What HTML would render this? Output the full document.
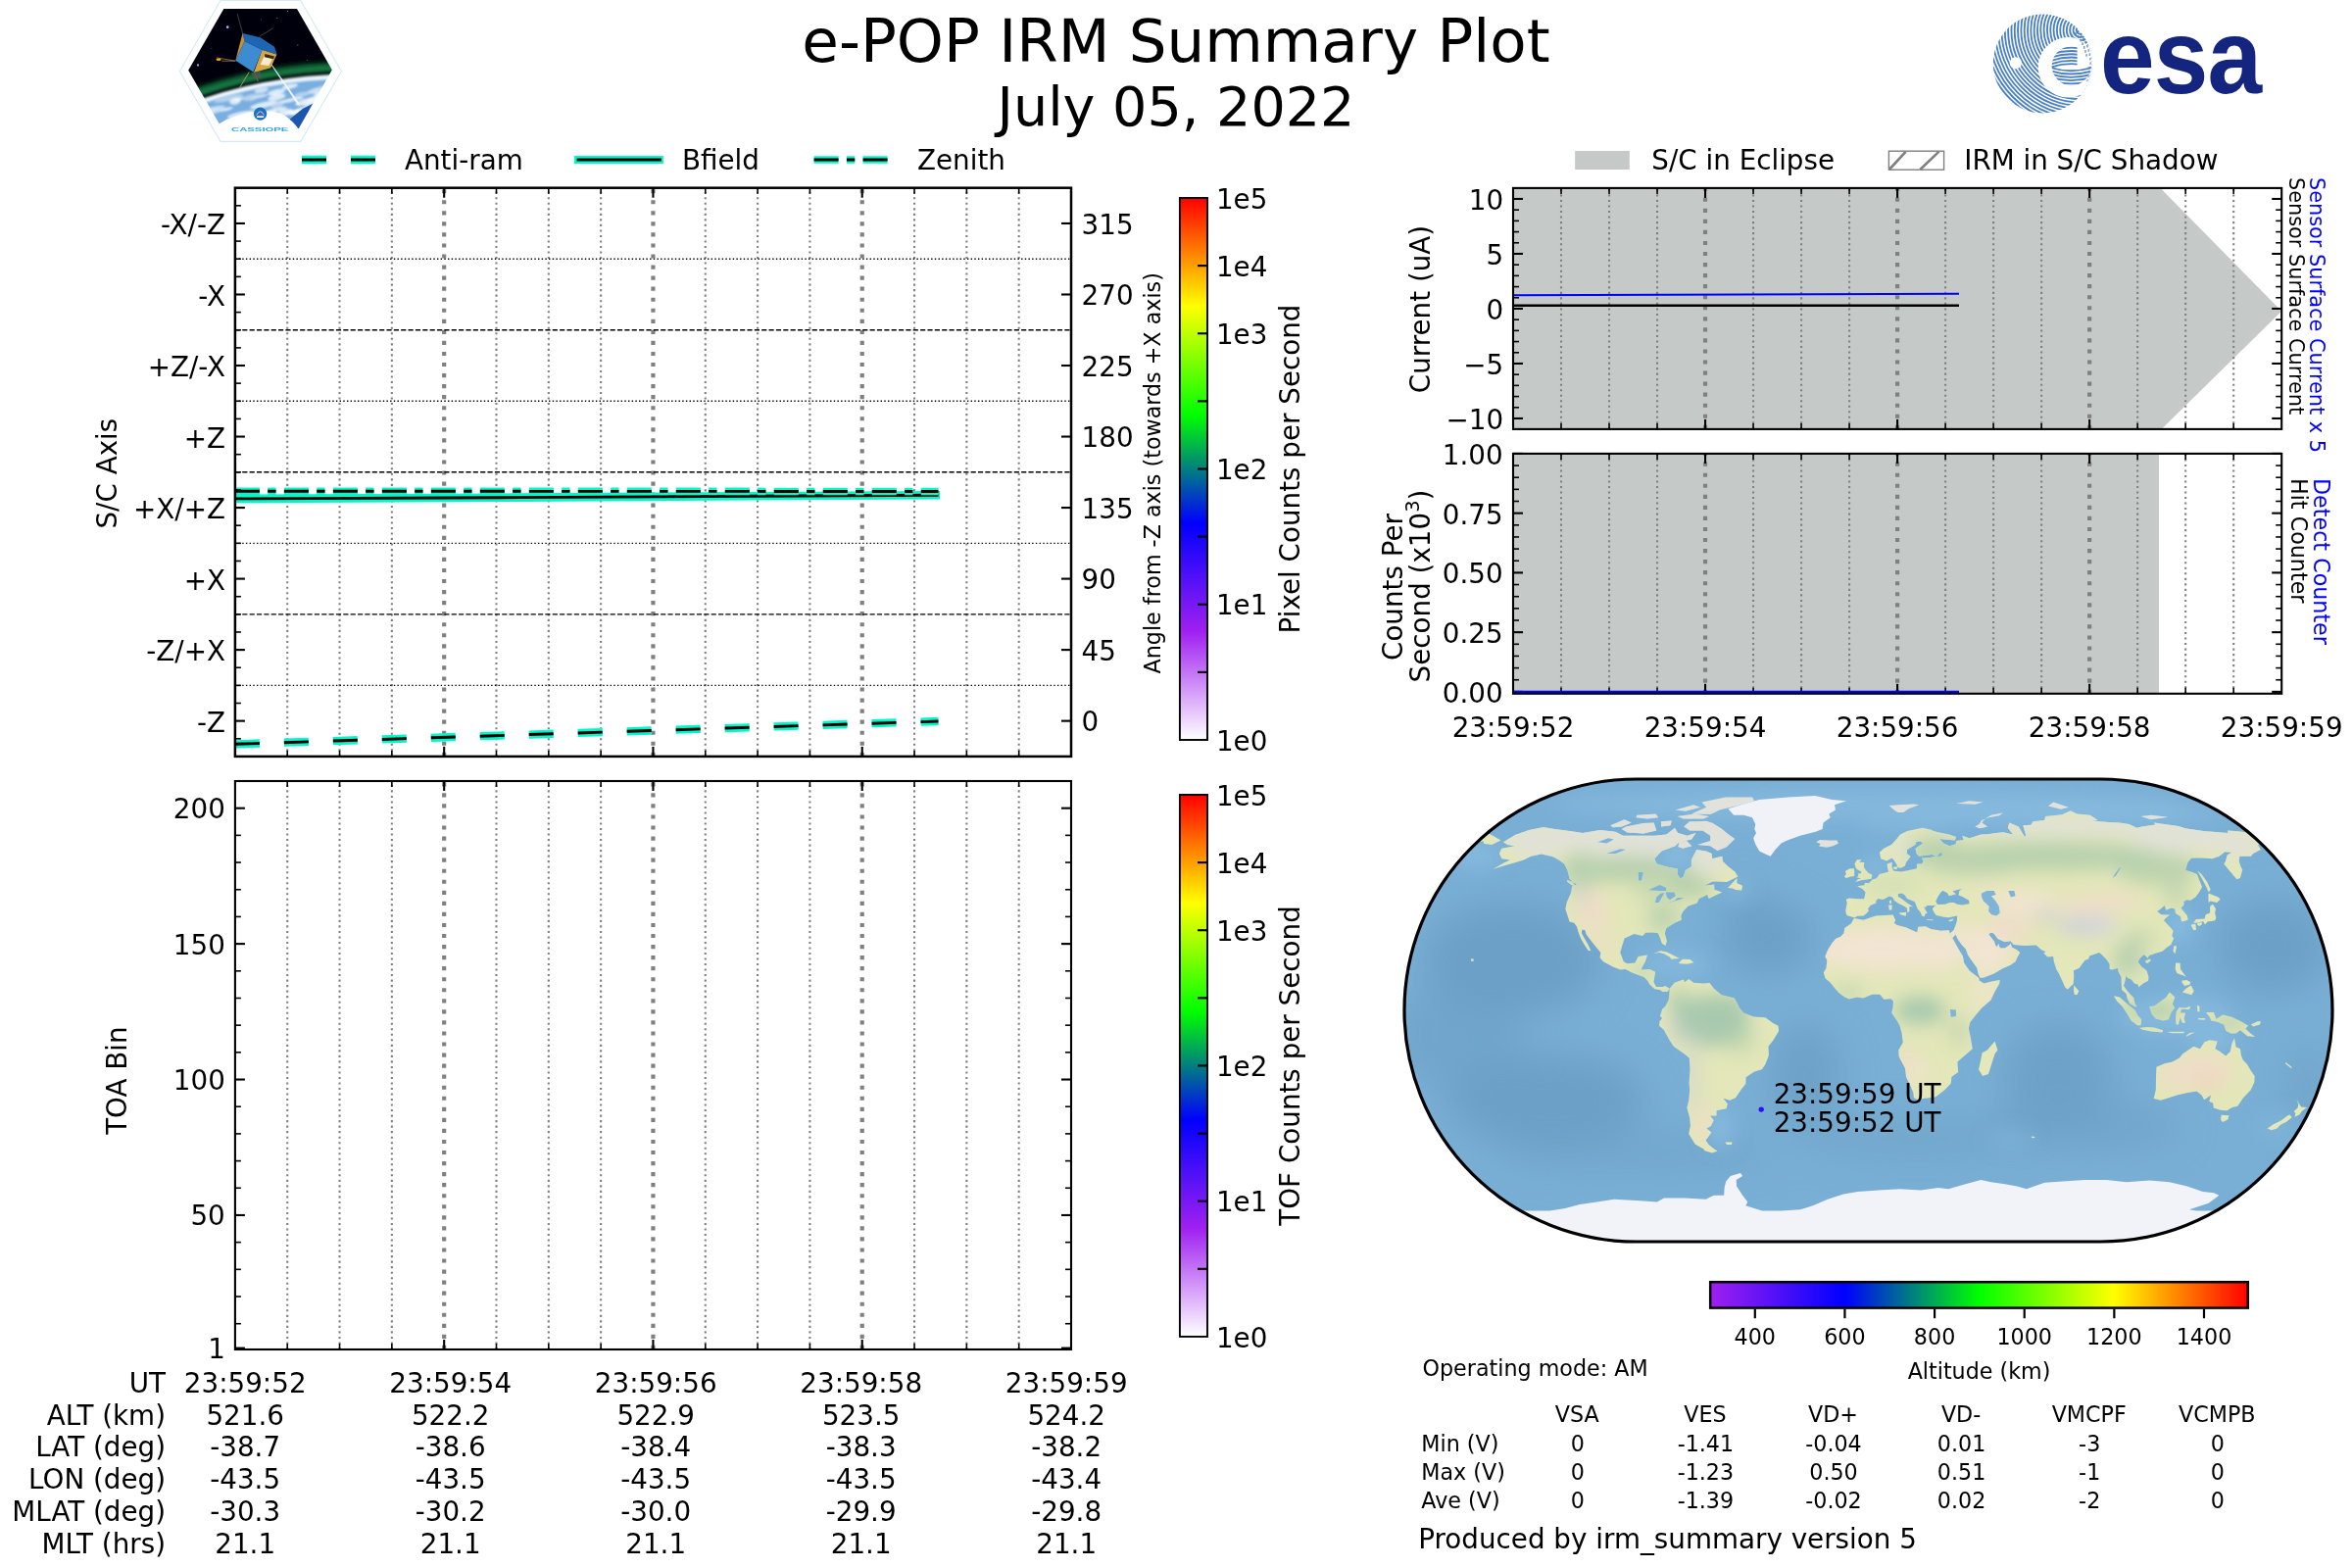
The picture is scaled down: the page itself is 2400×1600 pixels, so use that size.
<!DOCTYPE html><html><head><meta charset="utf-8"><title>e-POP IRM Summary Plot</title>
<style>html,body{margin:0;padding:0;background:#fff;overflow:hidden}svg{display:block;will-change:transform}text{font-family:"DejaVu Sans","Liberation Sans",sans-serif}</style></head><body>
<svg width="2400" height="1600" viewBox="0 0 2400 1600">
<defs>
<linearGradient id="cbv" x1="0" y1="1" x2="0" y2="0"><stop offset="0" stop-color="#ffffff"/><stop offset="0.2" stop-color="#a020f0"/><stop offset="0.4" stop-color="#0000ff"/><stop offset="0.6" stop-color="#00ff00"/><stop offset="0.8" stop-color="#ffff00"/><stop offset="1" stop-color="#ff0000"/></linearGradient>
<linearGradient id="cbh" x1="0" y1="0" x2="1" y2="0"><stop offset="0" stop-color="#a020f0"/><stop offset="0.25" stop-color="#0000ff"/><stop offset="0.5" stop-color="#00ff00"/><stop offset="0.75" stop-color="#ffff00"/><stop offset="1" stop-color="#ff0000"/></linearGradient>
</defs>
<rect x="0.00" y="0.00" width="2400.00" height="1600.00" fill="#fff" stroke="none" stroke-width="0.00"/>
<text x="1200.00" y="63.00" font-size="61.11" text-anchor="middle" fill="#000">e-POP IRM Summary Plot</text>
<text x="1200.00" y="127.50" font-size="55.56" text-anchor="middle" fill="#000">July 05, 2022</text>
<defs>
<clipPath id="hexclip"><polygon points="228.3,9.1 303.0,9.1 338.8,71.3 304.9,131.0 226.4,131.0 192.2,71.7"/></clipPath>
<clipPath id="earthclip"><circle cx="356.3" cy="539.1" r="459"/></clipPath>
<filter id="lb2" x="-30%" y="-30%" width="160%" height="160%"><feGaussianBlur stdDeviation="2.2"/></filter>
<filter id="lb1" x="-30%" y="-30%" width="160%" height="160%"><feGaussianBlur stdDeviation="0.8"/></filter>
<filter id="lb05" x="-10%" y="-10%" width="120%" height="120%"><feGaussianBlur stdDeviation="0.45"/></filter>
<radialGradient id="earthg" cx="0.45" cy="0.0" r="0.5"><stop offset="0" stop-color="#dcecf8"/><stop offset="0.6" stop-color="#8fbfe6"/><stop offset="1" stop-color="#4f8fd0"/></radialGradient>
</defs>
<polygon points="225.0,0.5 306.8,0.5 348.4,72.7 306.8,144.4 225.0,144.4 183.4,72.7" fill="#fff" stroke="#d3ebf1" stroke-width="1.1"/>
<g clip-path="url(#hexclip)" filter="url(#lb05)">
<rect x="185" y="5" width="165" height="135" fill="#02040a"/>
<circle cx="356.3" cy="539.1" r="471.4" fill="none" stroke="#0a6a38" stroke-width="9" filter="url(#lb2)" opacity="0.9"/>
<circle cx="356.3" cy="539.1" r="469.4" fill="none" stroke="#2aa860" stroke-width="2.5" filter="url(#lb2)" opacity="0.8"/>
<circle cx="356.3" cy="539.1" r="460.9" fill="#79aee0"/>
<circle cx="356.3" cy="539.1" r="460.9" fill="none" stroke="#eaf4fc" stroke-width="5" filter="url(#lb1)"/>
<g clip-path="url(#earthclip)"><g filter="url(#lb1)">
<ellipse cx="231.9" cy="92.5" rx="9.4" ry="1.6" fill="#ffffff" opacity="0.75" transform="rotate(-12 231.9 92.5)"/>
<ellipse cx="202.7" cy="112.2" rx="8.2" ry="3.5" fill="#ffffff" opacity="0.75" transform="rotate(-12 202.7 112.2)"/>
<ellipse cx="230.0" cy="111.6" rx="8.0" ry="1.6" fill="#ffffff" opacity="0.75" transform="rotate(-12 230.0 111.6)"/>
<ellipse cx="235.3" cy="129.5" rx="5.3" ry="2.7" fill="#c4dcf2" opacity="0.75" transform="rotate(-12 235.3 129.5)"/>
<ellipse cx="308.1" cy="96.5" rx="8.4" ry="2.6" fill="#c4dcf2" opacity="0.75" transform="rotate(-12 308.1 96.5)"/>
<ellipse cx="211.7" cy="114.7" rx="12.4" ry="2.4" fill="#e4f0fa" opacity="0.75" transform="rotate(-12 211.7 114.7)"/>
<ellipse cx="233.4" cy="100.3" rx="15.4" ry="3.1" fill="#c4dcf2" opacity="0.75" transform="rotate(-12 233.4 100.3)"/>
<ellipse cx="201.0" cy="100.8" rx="12.8" ry="1.9" fill="#e4f0fa" opacity="0.75" transform="rotate(-12 201.0 100.8)"/>
<ellipse cx="255.9" cy="114.4" rx="9.7" ry="1.6" fill="#c4dcf2" opacity="0.75" transform="rotate(-12 255.9 114.4)"/>
<ellipse cx="235.1" cy="123.1" rx="5.9" ry="2.3" fill="#c4dcf2" opacity="0.75" transform="rotate(-12 235.1 123.1)"/>
<ellipse cx="270.0" cy="116.5" rx="12.7" ry="1.5" fill="#e4f0fa" opacity="0.75" transform="rotate(-12 270.0 116.5)"/>
<ellipse cx="209.0" cy="128.2" rx="12.0" ry="2.2" fill="#e4f0fa" opacity="0.75" transform="rotate(-12 209.0 128.2)"/>
<ellipse cx="248.0" cy="120.9" rx="8.5" ry="2.5" fill="#c4dcf2" opacity="0.75" transform="rotate(-12 248.0 120.9)"/>
<ellipse cx="213.6" cy="90.7" rx="7.5" ry="3.0" fill="#e4f0fa" opacity="0.75" transform="rotate(-12 213.6 90.7)"/>
<ellipse cx="216.5" cy="129.1" rx="8.2" ry="1.3" fill="#c4dcf2" opacity="0.75" transform="rotate(-12 216.5 129.1)"/>
<ellipse cx="294.1" cy="127.4" rx="15.5" ry="2.9" fill="#c4dcf2" opacity="0.75" transform="rotate(-12 294.1 127.4)"/>
<ellipse cx="202.5" cy="100.7" rx="15.6" ry="3.0" fill="#ffffff" opacity="0.75" transform="rotate(-12 202.5 100.7)"/>
<ellipse cx="316.3" cy="126.3" rx="12.5" ry="1.4" fill="#e4f0fa" opacity="0.75" transform="rotate(-12 316.3 126.3)"/>
<ellipse cx="320.7" cy="100.8" rx="7.8" ry="2.6" fill="#e4f0fa" opacity="0.75" transform="rotate(-12 320.7 100.8)"/>
<ellipse cx="244.7" cy="88.4" rx="5.5" ry="1.6" fill="#c4dcf2" opacity="0.75" transform="rotate(-12 244.7 88.4)"/>
<ellipse cx="334.6" cy="113.1" rx="9.8" ry="1.7" fill="#e4f0fa" opacity="0.75" transform="rotate(-12 334.6 113.1)"/>
<ellipse cx="215.3" cy="90.7" rx="13.1" ry="2.6" fill="#e4f0fa" opacity="0.75" transform="rotate(-12 215.3 90.7)"/>
<ellipse cx="281.9" cy="112.0" rx="11.4" ry="1.9" fill="#ffffff" opacity="0.75" transform="rotate(-12 281.9 112.0)"/>
<ellipse cx="216.5" cy="111.3" rx="13.5" ry="2.1" fill="#e4f0fa" opacity="0.75" transform="rotate(-12 216.5 111.3)"/>
<ellipse cx="264.5" cy="98.6" rx="9.5" ry="1.3" fill="#ffffff" opacity="0.75" transform="rotate(-12 264.5 98.6)"/>
<ellipse cx="259.9" cy="116.5" rx="9.7" ry="1.7" fill="#e4f0fa" opacity="0.75" transform="rotate(-12 259.9 116.5)"/>
<ellipse cx="204.3" cy="99.2" rx="7.7" ry="1.7" fill="#e4f0fa" opacity="0.75" transform="rotate(-12 204.3 99.2)"/>
<ellipse cx="256.3" cy="99.5" rx="8.6" ry="3.2" fill="#c4dcf2" opacity="0.75" transform="rotate(-12 256.3 99.5)"/>
<ellipse cx="276.3" cy="131.6" rx="9.4" ry="3.3" fill="#ffffff" opacity="0.75" transform="rotate(-12 276.3 131.6)"/>
<ellipse cx="266.7" cy="92.1" rx="7.3" ry="3.2" fill="#e4f0fa" opacity="0.75" transform="rotate(-12 266.7 92.1)"/>
<ellipse cx="245.4" cy="116.9" rx="13.8" ry="2.7" fill="#ffffff" opacity="0.75" transform="rotate(-12 245.4 116.9)"/>
<ellipse cx="271.3" cy="116.8" rx="12.5" ry="1.8" fill="#ffffff" opacity="0.75" transform="rotate(-12 271.3 116.8)"/>
<ellipse cx="329.1" cy="91.3" rx="15.7" ry="3.4" fill="#e4f0fa" opacity="0.75" transform="rotate(-12 329.1 91.3)"/>
<ellipse cx="206.0" cy="127.6" rx="6.4" ry="3.4" fill="#ffffff" opacity="0.75" transform="rotate(-12 206.0 127.6)"/>
<ellipse cx="317.5" cy="118.3" rx="10.1" ry="2.3" fill="#ffffff" opacity="0.75" transform="rotate(-12 317.5 118.3)"/>
<ellipse cx="325.2" cy="97.6" rx="5.0" ry="3.3" fill="#ffffff" opacity="0.75" transform="rotate(-12 325.2 97.6)"/>
<ellipse cx="282.4" cy="99.3" rx="9.4" ry="3.0" fill="#ffffff" opacity="0.75" transform="rotate(-12 282.4 99.3)"/>
<ellipse cx="318.5" cy="112.2" rx="14.7" ry="1.7" fill="#c4dcf2" opacity="0.75" transform="rotate(-12 318.5 112.2)"/>
<ellipse cx="310.5" cy="112.7" rx="13.6" ry="3.3" fill="#ffffff" opacity="0.75" transform="rotate(-12 310.5 112.7)"/>
<ellipse cx="203.6" cy="89.5" rx="11.5" ry="2.3" fill="#c4dcf2" opacity="0.75" transform="rotate(-12 203.6 89.5)"/>
<ellipse cx="282.1" cy="94.1" rx="9.0" ry="3.0" fill="#ffffff" opacity="0.75" transform="rotate(-12 282.1 94.1)"/>
<ellipse cx="240.1" cy="103.3" rx="5.8" ry="3.4" fill="#ffffff" opacity="0.75" transform="rotate(-12 240.1 103.3)"/>
<ellipse cx="251.5" cy="122.6" rx="8.4" ry="1.7" fill="#ffffff" opacity="0.75" transform="rotate(-12 251.5 122.6)"/>
<ellipse cx="315.5" cy="105.6" rx="5.8" ry="3.3" fill="#c4dcf2" opacity="0.75" transform="rotate(-12 315.5 105.6)"/>
<ellipse cx="269.2" cy="107.1" rx="14.4" ry="3.0" fill="#ffffff" opacity="0.75" transform="rotate(-12 269.2 107.1)"/>
<ellipse cx="284.9" cy="129.4" rx="12.0" ry="3.3" fill="#ffffff" opacity="0.75" transform="rotate(-12 284.9 129.4)"/>
<ellipse cx="257.0" cy="123.1" rx="6.8" ry="3.2" fill="#e4f0fa" opacity="0.75" transform="rotate(-12 257.0 123.1)"/>
<ellipse cx="295.4" cy="102.4" rx="14.5" ry="1.8" fill="#ffffff" opacity="0.75" transform="rotate(-12 295.4 102.4)"/>
<ellipse cx="295.9" cy="88.2" rx="8.4" ry="2.5" fill="#ffffff" opacity="0.75" transform="rotate(-12 295.9 88.2)"/>
<ellipse cx="306.1" cy="114.4" rx="10.8" ry="2.4" fill="#ffffff" opacity="0.75" transform="rotate(-12 306.1 114.4)"/>
<ellipse cx="314.4" cy="103.7" rx="13.4" ry="3.5" fill="#ffffff" opacity="0.75" transform="rotate(-12 314.4 103.7)"/>
<ellipse cx="291.4" cy="114.8" rx="8.4" ry="3.3" fill="#ffffff" opacity="0.75" transform="rotate(-12 291.4 114.8)"/>
<ellipse cx="305.6" cy="113.0" rx="15.3" ry="2.4" fill="#ffffff" opacity="0.75" transform="rotate(-12 305.6 113.0)"/>
<ellipse cx="282.8" cy="107.5" rx="6.5" ry="3.0" fill="#c4dcf2" opacity="0.75" transform="rotate(-12 282.8 107.5)"/>
<ellipse cx="333.1" cy="103.0" rx="9.8" ry="2.6" fill="#e4f0fa" opacity="0.75" transform="rotate(-12 333.1 103.0)"/>
<ellipse cx="238.5" cy="129.3" rx="7.2" ry="3.0" fill="#ffffff" opacity="0.75" transform="rotate(-12 238.5 129.3)"/>
<ellipse cx="210.4" cy="116.4" rx="14.9" ry="2.0" fill="#c4dcf2" opacity="0.75" transform="rotate(-12 210.4 116.4)"/>
<ellipse cx="244.1" cy="101.2" rx="5.3" ry="1.2" fill="#ffffff" opacity="0.75" transform="rotate(-12 244.1 101.2)"/>
<ellipse cx="308.1" cy="123.5" rx="15.5" ry="1.6" fill="#ffffff" opacity="0.75" transform="rotate(-12 308.1 123.5)"/>
<ellipse cx="289.2" cy="131.7" rx="5.8" ry="3.3" fill="#ffffff" opacity="0.75" transform="rotate(-12 289.2 131.7)"/>
</g></g>
<polygon points="293.4,123.4 308.7,111.0 320.2,105.2 313.5,119.6 304.9,132.0" fill="#1f57ad"/>
<polygon points="276.0,65.2 276.7,64.8 306.3,106.4 303.9,107.3" fill="#f4f9ff" opacity="0.9"/>
<path d="M221.6 127.2 Q242.7 114.8 265.6 113.3 Q280.0 112.9 289.6 117.2 Q298.2 122.4 305.8 133.0 L305.8 140 L221.6 140Z" fill="#fff"/>
<circle cx="232.2" cy="27.7" r="1.34" fill="#b9a6ff"/>
<circle cx="202.0" cy="66.5" r="1.15" fill="#a99cf0"/>
<circle cx="282.9" cy="18.2" r="0.48" fill="#fff"/>
<circle cx="293.4" cy="11.5" r="0.48" fill="#fff"/>
<circle cx="303.9" cy="45.9" r="0.48" fill="#ddd"/>
<circle cx="266.6" cy="20.1" r="0.38" fill="#ccc"/>
<circle cx="313.5" cy="61.2" r="0.38" fill="#bbb"/>
<circle cx="215.9" cy="49.7" r="0.38" fill="#aaa"/>
<line x1="248.0" y1="35.4" x2="242.2" y2="14.3" stroke="#777" stroke-width="0.5"/>
<line x1="264.7" y1="37.3" x2="278.6" y2="28.7" stroke="#777" stroke-width="0.5"/>
<line x1="240.3" y1="62.2" x2="220.7" y2="58.8" stroke="#b98a3a" stroke-width="0.7"/>
<line x1="240.3" y1="62.2" x2="226.4" y2="62.2" stroke="#caa" stroke-width="0.6"/>
<line x1="254.2" y1="73.6" x2="244.6" y2="89.4" stroke="#c89a50" stroke-width="0.9"/>
<line x1="259.9" y1="73.6" x2="263.3" y2="83.2" stroke="#a67c3c" stroke-width="0.7"/>
<ellipse cx="223.1" cy="60.7" rx="2.6" ry="1.2" fill="#f5a623"/>
<polygon points="267.6,50.7 282.4,55.5 276.2,69.3 259.0,74.1" fill="#d8a63f"/>
<polygon points="269.5,57.4 278.1,59.8 274.3,67.0 265.6,66.0" fill="#f4ecd2"/>
<polygon points="270.4,55.0 280.0,57.4 279.0,60.3 270.0,58.3" fill="#3a2a10"/>
<polygon points="247.5,34.0 265.6,38.3 280.0,47.8 282.7,55.7 267.6,50.9 249.6,42.1" fill="#1f66b3"/>
<polygon points="240.3,61.7 249.6,42.1 267.6,50.9 258.5,73.6" fill="#3c8bd0"/>
<polygon points="240.3,61.7 247.5,34.0 249.6,42.1" fill="#c98f35"/>
<polygon points="256.1,74.6 265.6,72.7 266.6,79.4 259.9,81.3" fill="#555" opacity="0.8"/>
<circle cx="265.6" cy="116.2" r="6.6" fill="#1e6fc2"/>
<path d="M261.8 117.4 Q265.6 110.2 269.4 117.4" fill="none" stroke="#fff" stroke-width="0.7"/>
<rect x="262.0" y="118.4" width="7.2" height="1.6" fill="#fff"/>
<circle cx="266.1" cy="116.4" r="0.8" fill="#e33"/>
</g>
<text x="236.0" y="133.5" font-size="6.1" font-weight="bold" fill="#33a4e8" textLength="58.4" lengthAdjust="spacingAndGlyphs" style="font-family:'Liberation Sans',sans-serif">CASSIOPE</text>
<defs>
<clipPath id="esadisk"><circle cx="2084.3" cy="64.9" r="50.5"/></clipPath>
<clipPath id="esain"><path d="M2090 40H2119.6V68H2140V95H2090Z"/></clipPath>
</defs>
<g clip-path="url(#esadisk)">
<g fill="none" stroke="#4b80c4" stroke-width="1.85">
<circle cx="2122.8" cy="30.7" r="4.00"/>
<circle cx="2122.8" cy="30.7" r="7.32"/>
<circle cx="2122.8" cy="30.7" r="10.64"/>
<circle cx="2122.8" cy="30.7" r="13.96"/>
<circle cx="2122.8" cy="30.7" r="17.28"/>
<circle cx="2122.8" cy="30.7" r="20.60"/>
<circle cx="2122.8" cy="30.7" r="23.92"/>
<circle cx="2122.8" cy="30.7" r="27.24"/>
<circle cx="2122.8" cy="30.7" r="30.56"/>
<circle cx="2122.8" cy="30.7" r="33.88"/>
<circle cx="2122.8" cy="30.7" r="37.20"/>
<circle cx="2122.8" cy="30.7" r="40.52"/>
<circle cx="2122.8" cy="30.7" r="43.84"/>
<circle cx="2122.8" cy="30.7" r="47.16"/>
<circle cx="2122.8" cy="30.7" r="50.48"/>
<circle cx="2122.8" cy="30.7" r="53.80"/>
<circle cx="2122.8" cy="30.7" r="57.12"/>
<circle cx="2122.8" cy="30.7" r="60.44"/>
<circle cx="2122.8" cy="30.7" r="63.76"/>
<circle cx="2122.8" cy="30.7" r="67.08"/>
<circle cx="2122.8" cy="30.7" r="70.40"/>
<circle cx="2122.8" cy="30.7" r="73.72"/>
<circle cx="2122.8" cy="30.7" r="77.04"/>
<circle cx="2122.8" cy="30.7" r="80.36"/>
<circle cx="2122.8" cy="30.7" r="83.68"/>
<circle cx="2122.8" cy="30.7" r="87.00"/>
<circle cx="2122.8" cy="30.7" r="90.32"/>
<circle cx="2122.8" cy="30.7" r="93.64"/>
<circle cx="2122.8" cy="30.7" r="96.96"/>
<circle cx="2122.8" cy="30.7" r="100.28"/>
<circle cx="2122.8" cy="30.7" r="103.60"/>
<circle cx="2122.8" cy="30.7" r="106.92"/>
<circle cx="2122.8" cy="30.7" r="110.24"/>
<circle cx="2122.8" cy="30.7" r="113.56"/>
<circle cx="2122.8" cy="30.7" r="116.88"/>
<circle cx="2122.8" cy="30.7" r="120.20"/>
<circle cx="2122.8" cy="30.7" r="123.52"/>
</g>
<circle cx="2110.4" cy="68.8" r="30.7" fill="#fff"/>
<circle cx="2084.3" cy="64.9" r="49.3" fill="none" stroke="#4b80c4" stroke-width="2.4" stroke-dasharray="1.7 1.7" pathLength="0" opacity="0.0"/>
<g clip-path="url(#esain)"><g fill="none" stroke="#4b80c4" stroke-width="1.85">
<clipPath id="esain2"><circle cx="2113.7" cy="67.2" r="20.0"/></clipPath>
<g clip-path="url(#esain2)">
<path d="M2091.7 52.4 Q2113.7 44.9 2135.7 52.4"/>
<path d="M2091.7 55.7 Q2113.7 48.2 2135.7 55.7"/>
<path d="M2091.7 59.0 Q2113.7 51.5 2135.7 59.0"/>
<path d="M2091.7 62.3 Q2113.7 54.8 2135.7 62.3"/>
<path d="M2091.7 65.6 Q2113.7 58.1 2135.7 65.6"/>
<path d="M2091.7 68.9 Q2113.7 61.4 2135.7 68.9"/>
<path d="M2091.7 68.7 Q2113.7 76.2 2139.7 67.7"/>
<path d="M2091.7 72.0 Q2113.7 79.5 2139.7 71.0"/>
<path d="M2091.7 75.3 Q2113.7 82.8 2139.7 74.3"/>
<path d="M2091.7 78.6 Q2113.7 86.1 2139.7 77.6"/>
<path d="M2091.7 81.9 Q2113.7 89.4 2139.7 80.9"/>
<path d="M2091.7 85.2 Q2113.7 92.7 2139.7 84.2"/>
</g></g></g>
<g fill="#4b80c4">
<rect x="2119.3" y="31.4" width="2.6" height="1.6" opacity="0.90" transform="rotate(-112 2120.6 32.2)"/>
<rect x="2116.8" y="33.7" width="2.6" height="1.6" opacity="0.90" transform="rotate(-112 2118.1 34.5)"/>
<rect x="2122.2" y="34.8" width="2.6" height="1.6" opacity="0.87" transform="rotate(-107 2123.5 35.6)"/>
<rect x="2119.4" y="36.8" width="2.6" height="1.6" opacity="0.87" transform="rotate(-107 2120.7 37.6)"/>
<rect x="2124.6" y="38.5" width="2.6" height="1.6" opacity="0.84" transform="rotate(-102 2125.9 39.3)"/>
<rect x="2121.8" y="40.3" width="2.6" height="1.6" opacity="0.84" transform="rotate(-102 2123.1 41.1)"/>
<rect x="2126.8" y="42.4" width="2.6" height="1.6" opacity="0.81" transform="rotate(-96 2128.1 43.2)"/>
<rect x="2123.8" y="43.9" width="2.6" height="1.6" opacity="0.81" transform="rotate(-96 2125.1 44.7)"/>
<rect x="2128.6" y="46.4" width="2.6" height="1.6" opacity="0.78" transform="rotate(-91 2129.9 47.2)"/>
<rect x="2125.4" y="47.6" width="2.6" height="1.6" opacity="0.78" transform="rotate(-91 2126.7 48.4)"/>
<rect x="2130.0" y="50.6" width="2.6" height="1.6" opacity="0.75" transform="rotate(-86 2131.3 51.4)"/>
<rect x="2126.7" y="51.6" width="2.6" height="1.6" opacity="0.75" transform="rotate(-86 2128.0 52.4)"/>
<rect x="2131.0" y="54.9" width="2.6" height="1.6" opacity="0.72" transform="rotate(-81 2132.3 55.7)"/>
<rect x="2127.7" y="55.6" width="2.6" height="1.6" opacity="0.72" transform="rotate(-81 2129.0 56.4)"/>
<rect x="2131.7" y="59.3" width="2.6" height="1.6" opacity="0.69" transform="rotate(-76 2133.0 60.1)"/>
<rect x="2131.9" y="63.8" width="2.6" height="1.6" opacity="0.66" transform="rotate(-70 2133.2 64.6)"/>
<rect x="2131.7" y="68.2" width="2.6" height="1.6" opacity="0.63" transform="rotate(-65 2133.0 69.0)"/>
<rect x="2131.2" y="72.6" width="2.6" height="1.6" opacity="0.60" transform="rotate(-60 2132.5 73.4)"/>
<rect x="2130.2" y="76.9" width="2.6" height="1.6" opacity="0.57" transform="rotate(-55 2131.5 77.7)"/>
<rect x="2128.8" y="81.1" width="2.6" height="1.6" opacity="0.54" transform="rotate(-50 2130.1 81.9)"/>
</g>
<circle cx="2056.9" cy="64.3" r="6.1" fill="#fff"/>
</g>
<text transform="translate(2143.0 94.9) scale(0.926 1)" x="0" y="0" font-size="108" font-weight="bold" fill="#14257f" style="font-family:'Liberation Sans',sans-serif" letter-spacing="-1">esa</text>
<line x1="293.22" y1="771.90" x2="293.22" y2="191.70" stroke="#808080" stroke-width="2.08" stroke-dasharray="2.08 3.44"/>
<line x1="346.54" y1="771.90" x2="346.54" y2="191.70" stroke="#808080" stroke-width="2.08" stroke-dasharray="2.08 3.44"/>
<line x1="399.86" y1="771.90" x2="399.86" y2="191.70" stroke="#808080" stroke-width="2.08" stroke-dasharray="2.08 3.44"/>
<line x1="453.18" y1="771.90" x2="453.18" y2="191.70" stroke="#808080" stroke-width="4.17" stroke-dasharray="4.17 6.88"/>
<line x1="506.49" y1="771.90" x2="506.49" y2="191.70" stroke="#808080" stroke-width="2.08" stroke-dasharray="2.08 3.44"/>
<line x1="559.81" y1="771.90" x2="559.81" y2="191.70" stroke="#808080" stroke-width="2.08" stroke-dasharray="2.08 3.44"/>
<line x1="613.13" y1="771.90" x2="613.13" y2="191.70" stroke="#808080" stroke-width="2.08" stroke-dasharray="2.08 3.44"/>
<line x1="666.45" y1="771.90" x2="666.45" y2="191.70" stroke="#808080" stroke-width="4.17" stroke-dasharray="4.17 6.88"/>
<line x1="719.77" y1="771.90" x2="719.77" y2="191.70" stroke="#808080" stroke-width="2.08" stroke-dasharray="2.08 3.44"/>
<line x1="773.09" y1="771.90" x2="773.09" y2="191.70" stroke="#808080" stroke-width="2.08" stroke-dasharray="2.08 3.44"/>
<line x1="826.41" y1="771.90" x2="826.41" y2="191.70" stroke="#808080" stroke-width="2.08" stroke-dasharray="2.08 3.44"/>
<line x1="879.73" y1="771.90" x2="879.73" y2="191.70" stroke="#808080" stroke-width="4.17" stroke-dasharray="4.17 6.88"/>
<line x1="933.04" y1="771.90" x2="933.04" y2="191.70" stroke="#808080" stroke-width="2.08" stroke-dasharray="2.08 3.44"/>
<line x1="986.36" y1="771.90" x2="986.36" y2="191.70" stroke="#808080" stroke-width="2.08" stroke-dasharray="2.08 3.44"/>
<line x1="1039.68" y1="771.90" x2="1039.68" y2="191.70" stroke="#808080" stroke-width="2.08" stroke-dasharray="2.08 3.44"/>
<line x1="239.90" y1="699.38" x2="1093.00" y2="699.38" stroke="#000" stroke-width="1.39" stroke-dasharray="1.39 2.29"/>
<line x1="239.90" y1="626.85" x2="1093.00" y2="626.85" stroke="#000" stroke-width="1.39" stroke-dasharray="5.14 2.22"/>
<line x1="239.90" y1="554.33" x2="1093.00" y2="554.33" stroke="#000" stroke-width="1.39" stroke-dasharray="1.39 2.29"/>
<line x1="239.90" y1="481.80" x2="1093.00" y2="481.80" stroke="#000" stroke-width="1.39" stroke-dasharray="5.14 2.22"/>
<line x1="239.90" y1="409.27" x2="1093.00" y2="409.27" stroke="#000" stroke-width="1.39" stroke-dasharray="1.39 2.29"/>
<line x1="239.90" y1="336.75" x2="1093.00" y2="336.75" stroke="#000" stroke-width="1.39" stroke-dasharray="5.14 2.22"/>
<line x1="239.90" y1="264.22" x2="1093.00" y2="264.22" stroke="#000" stroke-width="1.39" stroke-dasharray="1.39 2.29"/>
<path d="M239.9 508.9 L530 507.6 L959.0 505.2" fill="none" stroke="#00f8c8" stroke-width="8.6"/>
<path d="M239.9 508.9 L530 507.6 L957.5 505.2" fill="none" stroke="#000" stroke-width="2.9"/>
<line x1="239.90" y1="501.20" x2="957.50" y2="501.50" stroke="#00f8c8" stroke-width="7.60" stroke-dasharray="25 8.33 8.33 8.33"/>
<line x1="239.90" y1="501.20" x2="957.50" y2="501.50" stroke="#000" stroke-width="2.90" stroke-dasharray="25 8.33 8.33 8.33"/>
<line x1="239.90" y1="759.30" x2="957.50" y2="736.00" stroke="#00f8c8" stroke-width="8.30" stroke-dasharray="25 25"/>
<line x1="239.90" y1="759.30" x2="957.50" y2="736.00" stroke="#000" stroke-width="2.90" stroke-dasharray="25 25"/>
<line x1="293.22" y1="771.90" x2="293.22" y2="765.90" stroke="#000" stroke-width="1.60"/>
<line x1="293.22" y1="191.70" x2="293.22" y2="197.70" stroke="#000" stroke-width="1.60"/>
<line x1="346.54" y1="771.90" x2="346.54" y2="765.90" stroke="#000" stroke-width="1.60"/>
<line x1="346.54" y1="191.70" x2="346.54" y2="197.70" stroke="#000" stroke-width="1.60"/>
<line x1="399.86" y1="771.90" x2="399.86" y2="765.90" stroke="#000" stroke-width="1.60"/>
<line x1="399.86" y1="191.70" x2="399.86" y2="197.70" stroke="#000" stroke-width="1.60"/>
<line x1="453.18" y1="771.90" x2="453.18" y2="761.90" stroke="#000" stroke-width="2.10"/>
<line x1="453.18" y1="191.70" x2="453.18" y2="201.70" stroke="#000" stroke-width="2.10"/>
<line x1="506.49" y1="771.90" x2="506.49" y2="765.90" stroke="#000" stroke-width="1.60"/>
<line x1="506.49" y1="191.70" x2="506.49" y2="197.70" stroke="#000" stroke-width="1.60"/>
<line x1="559.81" y1="771.90" x2="559.81" y2="765.90" stroke="#000" stroke-width="1.60"/>
<line x1="559.81" y1="191.70" x2="559.81" y2="197.70" stroke="#000" stroke-width="1.60"/>
<line x1="613.13" y1="771.90" x2="613.13" y2="765.90" stroke="#000" stroke-width="1.60"/>
<line x1="613.13" y1="191.70" x2="613.13" y2="197.70" stroke="#000" stroke-width="1.60"/>
<line x1="666.45" y1="771.90" x2="666.45" y2="761.90" stroke="#000" stroke-width="2.10"/>
<line x1="666.45" y1="191.70" x2="666.45" y2="201.70" stroke="#000" stroke-width="2.10"/>
<line x1="719.77" y1="771.90" x2="719.77" y2="765.90" stroke="#000" stroke-width="1.60"/>
<line x1="719.77" y1="191.70" x2="719.77" y2="197.70" stroke="#000" stroke-width="1.60"/>
<line x1="773.09" y1="771.90" x2="773.09" y2="765.90" stroke="#000" stroke-width="1.60"/>
<line x1="773.09" y1="191.70" x2="773.09" y2="197.70" stroke="#000" stroke-width="1.60"/>
<line x1="826.41" y1="771.90" x2="826.41" y2="765.90" stroke="#000" stroke-width="1.60"/>
<line x1="826.41" y1="191.70" x2="826.41" y2="197.70" stroke="#000" stroke-width="1.60"/>
<line x1="879.73" y1="771.90" x2="879.73" y2="761.90" stroke="#000" stroke-width="2.10"/>
<line x1="879.73" y1="191.70" x2="879.73" y2="201.70" stroke="#000" stroke-width="2.10"/>
<line x1="933.04" y1="771.90" x2="933.04" y2="765.90" stroke="#000" stroke-width="1.60"/>
<line x1="933.04" y1="191.70" x2="933.04" y2="197.70" stroke="#000" stroke-width="1.60"/>
<line x1="986.36" y1="771.90" x2="986.36" y2="765.90" stroke="#000" stroke-width="1.60"/>
<line x1="986.36" y1="191.70" x2="986.36" y2="197.70" stroke="#000" stroke-width="1.60"/>
<line x1="1039.68" y1="771.90" x2="1039.68" y2="765.90" stroke="#000" stroke-width="1.60"/>
<line x1="1039.68" y1="191.70" x2="1039.68" y2="197.70" stroke="#000" stroke-width="1.60"/>
<line x1="239.90" y1="753.77" x2="245.90" y2="753.77" stroke="#000" stroke-width="1.60"/>
<line x1="239.90" y1="735.64" x2="249.90" y2="735.64" stroke="#000" stroke-width="2.10"/>
<line x1="1093.00" y1="735.64" x2="1083.00" y2="735.64" stroke="#000" stroke-width="2.10"/>
<line x1="239.90" y1="717.51" x2="245.90" y2="717.51" stroke="#000" stroke-width="1.60"/>
<line x1="239.90" y1="699.38" x2="245.90" y2="699.38" stroke="#000" stroke-width="1.60"/>
<line x1="239.90" y1="681.24" x2="245.90" y2="681.24" stroke="#000" stroke-width="1.60"/>
<line x1="239.90" y1="663.11" x2="249.90" y2="663.11" stroke="#000" stroke-width="2.10"/>
<line x1="1093.00" y1="663.11" x2="1083.00" y2="663.11" stroke="#000" stroke-width="2.10"/>
<line x1="239.90" y1="644.98" x2="245.90" y2="644.98" stroke="#000" stroke-width="1.60"/>
<line x1="239.90" y1="626.85" x2="245.90" y2="626.85" stroke="#000" stroke-width="1.60"/>
<line x1="239.90" y1="608.72" x2="245.90" y2="608.72" stroke="#000" stroke-width="1.60"/>
<line x1="239.90" y1="590.59" x2="249.90" y2="590.59" stroke="#000" stroke-width="2.10"/>
<line x1="1093.00" y1="590.59" x2="1083.00" y2="590.59" stroke="#000" stroke-width="2.10"/>
<line x1="239.90" y1="572.46" x2="245.90" y2="572.46" stroke="#000" stroke-width="1.60"/>
<line x1="239.90" y1="554.33" x2="245.90" y2="554.33" stroke="#000" stroke-width="1.60"/>
<line x1="239.90" y1="536.19" x2="245.90" y2="536.19" stroke="#000" stroke-width="1.60"/>
<line x1="239.90" y1="518.06" x2="249.90" y2="518.06" stroke="#000" stroke-width="2.10"/>
<line x1="1093.00" y1="518.06" x2="1083.00" y2="518.06" stroke="#000" stroke-width="2.10"/>
<line x1="239.90" y1="499.93" x2="245.90" y2="499.93" stroke="#000" stroke-width="1.60"/>
<line x1="239.90" y1="481.80" x2="245.90" y2="481.80" stroke="#000" stroke-width="1.60"/>
<line x1="239.90" y1="463.67" x2="245.90" y2="463.67" stroke="#000" stroke-width="1.60"/>
<line x1="239.90" y1="445.54" x2="249.90" y2="445.54" stroke="#000" stroke-width="2.10"/>
<line x1="1093.00" y1="445.54" x2="1083.00" y2="445.54" stroke="#000" stroke-width="2.10"/>
<line x1="239.90" y1="427.41" x2="245.90" y2="427.41" stroke="#000" stroke-width="1.60"/>
<line x1="239.90" y1="409.27" x2="245.90" y2="409.27" stroke="#000" stroke-width="1.60"/>
<line x1="239.90" y1="391.14" x2="245.90" y2="391.14" stroke="#000" stroke-width="1.60"/>
<line x1="239.90" y1="373.01" x2="249.90" y2="373.01" stroke="#000" stroke-width="2.10"/>
<line x1="1093.00" y1="373.01" x2="1083.00" y2="373.01" stroke="#000" stroke-width="2.10"/>
<line x1="239.90" y1="354.88" x2="245.90" y2="354.88" stroke="#000" stroke-width="1.60"/>
<line x1="239.90" y1="336.75" x2="245.90" y2="336.75" stroke="#000" stroke-width="1.60"/>
<line x1="239.90" y1="318.62" x2="245.90" y2="318.62" stroke="#000" stroke-width="1.60"/>
<line x1="239.90" y1="300.49" x2="249.90" y2="300.49" stroke="#000" stroke-width="2.10"/>
<line x1="1093.00" y1="300.49" x2="1083.00" y2="300.49" stroke="#000" stroke-width="2.10"/>
<line x1="239.90" y1="282.36" x2="245.90" y2="282.36" stroke="#000" stroke-width="1.60"/>
<line x1="239.90" y1="264.22" x2="245.90" y2="264.22" stroke="#000" stroke-width="1.60"/>
<line x1="239.90" y1="246.09" x2="245.90" y2="246.09" stroke="#000" stroke-width="1.60"/>
<line x1="239.90" y1="227.96" x2="249.90" y2="227.96" stroke="#000" stroke-width="2.10"/>
<line x1="1093.00" y1="227.96" x2="1083.00" y2="227.96" stroke="#000" stroke-width="2.10"/>
<line x1="239.90" y1="209.83" x2="245.90" y2="209.83" stroke="#000" stroke-width="1.60"/>
<rect x="239.90" y="191.70" width="853.10" height="580.20" fill="none" stroke="#000" stroke-width="2.50"/>
<text x="230.00" y="746.74" font-size="27.78" text-anchor="end" fill="#000">-Z</text>
<text x="1103.60" y="746.44" font-size="27.78" text-anchor="start" fill="#000">0</text>
<text x="230.00" y="674.21" font-size="27.78" text-anchor="end" fill="#000">-Z/+X</text>
<text x="1103.60" y="673.91" font-size="27.78" text-anchor="start" fill="#000">45</text>
<text x="230.00" y="601.69" font-size="27.78" text-anchor="end" fill="#000">+X</text>
<text x="1103.60" y="601.39" font-size="27.78" text-anchor="start" fill="#000">90</text>
<text x="230.00" y="529.16" font-size="27.78" text-anchor="end" fill="#000">+X/+Z</text>
<text x="1103.60" y="528.86" font-size="27.78" text-anchor="start" fill="#000">135</text>
<text x="230.00" y="456.64" font-size="27.78" text-anchor="end" fill="#000">+Z</text>
<text x="1103.60" y="456.34" font-size="27.78" text-anchor="start" fill="#000">180</text>
<text x="230.00" y="384.11" font-size="27.78" text-anchor="end" fill="#000">+Z/-X</text>
<text x="1103.60" y="383.81" font-size="27.78" text-anchor="start" fill="#000">225</text>
<text x="230.00" y="311.59" font-size="27.78" text-anchor="end" fill="#000">-X</text>
<text x="1103.60" y="311.29" font-size="27.78" text-anchor="start" fill="#000">270</text>
<text x="230.00" y="239.06" font-size="27.78" text-anchor="end" fill="#000">-X/-Z</text>
<text x="1103.60" y="238.76" font-size="27.78" text-anchor="start" fill="#000">315</text>
<text x="118.60" y="483.10" font-size="27.78" text-anchor="middle" fill="#000" transform="rotate(-90 118.60 483.10)">S/C Axis</text>
<text x="1184.00" y="482.80" font-size="22.22" text-anchor="middle" fill="#000" transform="rotate(-90 1184.00 482.80)">Angle from -Z axis (towards +X axis)</text>
<line x1="308.00" y1="163.00" x2="383.60" y2="163.00" stroke="#00f8c8" stroke-width="8.30" stroke-dasharray="25 25"/>
<line x1="308.00" y1="163.00" x2="383.60" y2="163.00" stroke="#000" stroke-width="2.90" stroke-dasharray="25 25"/>
<text x="413.00" y="173.30" font-size="27.78" text-anchor="start" fill="#000">Anti-ram</text>
<line x1="585.90" y1="163.00" x2="676.90" y2="163.00" stroke="#00f8c8" stroke-width="8.20"/>
<line x1="588.60" y1="163.00" x2="674.90" y2="163.00" stroke="#000" stroke-width="2.90"/>
<text x="696.00" y="173.30" font-size="27.78" text-anchor="start" fill="#000">Bfield</text>
<line x1="830.60" y1="163.00" x2="905.60" y2="163.00" stroke="#00f8c8" stroke-width="7.60" stroke-dasharray="25 8.33 8.33 8.33"/>
<line x1="830.60" y1="163.00" x2="905.60" y2="163.00" stroke="#000" stroke-width="2.90" stroke-dasharray="25 8.33 8.33 8.33"/>
<text x="936.00" y="173.30" font-size="27.78" text-anchor="start" fill="#000">Zenith</text>
<line x1="293.22" y1="1377.00" x2="293.22" y2="797.00" stroke="#808080" stroke-width="2.08" stroke-dasharray="2.08 3.44"/>
<line x1="346.54" y1="1377.00" x2="346.54" y2="797.00" stroke="#808080" stroke-width="2.08" stroke-dasharray="2.08 3.44"/>
<line x1="399.86" y1="1377.00" x2="399.86" y2="797.00" stroke="#808080" stroke-width="2.08" stroke-dasharray="2.08 3.44"/>
<line x1="453.18" y1="1377.00" x2="453.18" y2="797.00" stroke="#808080" stroke-width="4.17" stroke-dasharray="4.17 6.88"/>
<line x1="506.49" y1="1377.00" x2="506.49" y2="797.00" stroke="#808080" stroke-width="2.08" stroke-dasharray="2.08 3.44"/>
<line x1="559.81" y1="1377.00" x2="559.81" y2="797.00" stroke="#808080" stroke-width="2.08" stroke-dasharray="2.08 3.44"/>
<line x1="613.13" y1="1377.00" x2="613.13" y2="797.00" stroke="#808080" stroke-width="2.08" stroke-dasharray="2.08 3.44"/>
<line x1="666.45" y1="1377.00" x2="666.45" y2="797.00" stroke="#808080" stroke-width="4.17" stroke-dasharray="4.17 6.88"/>
<line x1="719.77" y1="1377.00" x2="719.77" y2="797.00" stroke="#808080" stroke-width="2.08" stroke-dasharray="2.08 3.44"/>
<line x1="773.09" y1="1377.00" x2="773.09" y2="797.00" stroke="#808080" stroke-width="2.08" stroke-dasharray="2.08 3.44"/>
<line x1="826.41" y1="1377.00" x2="826.41" y2="797.00" stroke="#808080" stroke-width="2.08" stroke-dasharray="2.08 3.44"/>
<line x1="879.73" y1="1377.00" x2="879.73" y2="797.00" stroke="#808080" stroke-width="4.17" stroke-dasharray="4.17 6.88"/>
<line x1="933.04" y1="1377.00" x2="933.04" y2="797.00" stroke="#808080" stroke-width="2.08" stroke-dasharray="2.08 3.44"/>
<line x1="986.36" y1="1377.00" x2="986.36" y2="797.00" stroke="#808080" stroke-width="2.08" stroke-dasharray="2.08 3.44"/>
<line x1="1039.68" y1="1377.00" x2="1039.68" y2="797.00" stroke="#808080" stroke-width="2.08" stroke-dasharray="2.08 3.44"/>
<line x1="293.22" y1="1377.00" x2="293.22" y2="1371.00" stroke="#000" stroke-width="1.60"/>
<line x1="293.22" y1="797.00" x2="293.22" y2="803.00" stroke="#000" stroke-width="1.60"/>
<line x1="346.54" y1="1377.00" x2="346.54" y2="1371.00" stroke="#000" stroke-width="1.60"/>
<line x1="346.54" y1="797.00" x2="346.54" y2="803.00" stroke="#000" stroke-width="1.60"/>
<line x1="399.86" y1="1377.00" x2="399.86" y2="1371.00" stroke="#000" stroke-width="1.60"/>
<line x1="399.86" y1="797.00" x2="399.86" y2="803.00" stroke="#000" stroke-width="1.60"/>
<line x1="453.18" y1="1377.00" x2="453.18" y2="1367.00" stroke="#000" stroke-width="2.10"/>
<line x1="453.18" y1="797.00" x2="453.18" y2="807.00" stroke="#000" stroke-width="2.10"/>
<line x1="506.49" y1="1377.00" x2="506.49" y2="1371.00" stroke="#000" stroke-width="1.60"/>
<line x1="506.49" y1="797.00" x2="506.49" y2="803.00" stroke="#000" stroke-width="1.60"/>
<line x1="559.81" y1="1377.00" x2="559.81" y2="1371.00" stroke="#000" stroke-width="1.60"/>
<line x1="559.81" y1="797.00" x2="559.81" y2="803.00" stroke="#000" stroke-width="1.60"/>
<line x1="613.13" y1="1377.00" x2="613.13" y2="1371.00" stroke="#000" stroke-width="1.60"/>
<line x1="613.13" y1="797.00" x2="613.13" y2="803.00" stroke="#000" stroke-width="1.60"/>
<line x1="666.45" y1="1377.00" x2="666.45" y2="1367.00" stroke="#000" stroke-width="2.10"/>
<line x1="666.45" y1="797.00" x2="666.45" y2="807.00" stroke="#000" stroke-width="2.10"/>
<line x1="719.77" y1="1377.00" x2="719.77" y2="1371.00" stroke="#000" stroke-width="1.60"/>
<line x1="719.77" y1="797.00" x2="719.77" y2="803.00" stroke="#000" stroke-width="1.60"/>
<line x1="773.09" y1="1377.00" x2="773.09" y2="1371.00" stroke="#000" stroke-width="1.60"/>
<line x1="773.09" y1="797.00" x2="773.09" y2="803.00" stroke="#000" stroke-width="1.60"/>
<line x1="826.41" y1="1377.00" x2="826.41" y2="1371.00" stroke="#000" stroke-width="1.60"/>
<line x1="826.41" y1="797.00" x2="826.41" y2="803.00" stroke="#000" stroke-width="1.60"/>
<line x1="879.73" y1="1377.00" x2="879.73" y2="1367.00" stroke="#000" stroke-width="2.10"/>
<line x1="879.73" y1="797.00" x2="879.73" y2="807.00" stroke="#000" stroke-width="2.10"/>
<line x1="933.04" y1="1377.00" x2="933.04" y2="1371.00" stroke="#000" stroke-width="1.60"/>
<line x1="933.04" y1="797.00" x2="933.04" y2="803.00" stroke="#000" stroke-width="1.60"/>
<line x1="986.36" y1="1377.00" x2="986.36" y2="1371.00" stroke="#000" stroke-width="1.60"/>
<line x1="986.36" y1="797.00" x2="986.36" y2="803.00" stroke="#000" stroke-width="1.60"/>
<line x1="1039.68" y1="1377.00" x2="1039.68" y2="1371.00" stroke="#000" stroke-width="1.60"/>
<line x1="1039.68" y1="797.00" x2="1039.68" y2="803.00" stroke="#000" stroke-width="1.60"/>
<line x1="239.90" y1="1350.70" x2="245.90" y2="1350.70" stroke="#000" stroke-width="1.60"/>
<line x1="1093.00" y1="1350.70" x2="1087.00" y2="1350.70" stroke="#000" stroke-width="1.60"/>
<line x1="239.90" y1="1323.01" x2="245.90" y2="1323.01" stroke="#000" stroke-width="1.60"/>
<line x1="1093.00" y1="1323.01" x2="1087.00" y2="1323.01" stroke="#000" stroke-width="1.60"/>
<line x1="239.90" y1="1295.33" x2="245.90" y2="1295.33" stroke="#000" stroke-width="1.60"/>
<line x1="1093.00" y1="1295.33" x2="1087.00" y2="1295.33" stroke="#000" stroke-width="1.60"/>
<line x1="239.90" y1="1267.64" x2="245.90" y2="1267.64" stroke="#000" stroke-width="1.60"/>
<line x1="1093.00" y1="1267.64" x2="1087.00" y2="1267.64" stroke="#000" stroke-width="1.60"/>
<line x1="239.90" y1="1239.96" x2="249.90" y2="1239.96" stroke="#000" stroke-width="2.10"/>
<line x1="1093.00" y1="1239.96" x2="1083.00" y2="1239.96" stroke="#000" stroke-width="2.10"/>
<line x1="239.90" y1="1212.27" x2="245.90" y2="1212.27" stroke="#000" stroke-width="1.60"/>
<line x1="1093.00" y1="1212.27" x2="1087.00" y2="1212.27" stroke="#000" stroke-width="1.60"/>
<line x1="239.90" y1="1184.59" x2="245.90" y2="1184.59" stroke="#000" stroke-width="1.60"/>
<line x1="1093.00" y1="1184.59" x2="1087.00" y2="1184.59" stroke="#000" stroke-width="1.60"/>
<line x1="239.90" y1="1156.90" x2="245.90" y2="1156.90" stroke="#000" stroke-width="1.60"/>
<line x1="1093.00" y1="1156.90" x2="1087.00" y2="1156.90" stroke="#000" stroke-width="1.60"/>
<line x1="239.90" y1="1129.22" x2="245.90" y2="1129.22" stroke="#000" stroke-width="1.60"/>
<line x1="1093.00" y1="1129.22" x2="1087.00" y2="1129.22" stroke="#000" stroke-width="1.60"/>
<line x1="239.90" y1="1101.53" x2="249.90" y2="1101.53" stroke="#000" stroke-width="2.10"/>
<line x1="1093.00" y1="1101.53" x2="1083.00" y2="1101.53" stroke="#000" stroke-width="2.10"/>
<line x1="239.90" y1="1073.85" x2="245.90" y2="1073.85" stroke="#000" stroke-width="1.60"/>
<line x1="1093.00" y1="1073.85" x2="1087.00" y2="1073.85" stroke="#000" stroke-width="1.60"/>
<line x1="239.90" y1="1046.16" x2="245.90" y2="1046.16" stroke="#000" stroke-width="1.60"/>
<line x1="1093.00" y1="1046.16" x2="1087.00" y2="1046.16" stroke="#000" stroke-width="1.60"/>
<line x1="239.90" y1="1018.48" x2="245.90" y2="1018.48" stroke="#000" stroke-width="1.60"/>
<line x1="1093.00" y1="1018.48" x2="1087.00" y2="1018.48" stroke="#000" stroke-width="1.60"/>
<line x1="239.90" y1="990.79" x2="245.90" y2="990.79" stroke="#000" stroke-width="1.60"/>
<line x1="1093.00" y1="990.79" x2="1087.00" y2="990.79" stroke="#000" stroke-width="1.60"/>
<line x1="239.90" y1="963.11" x2="249.90" y2="963.11" stroke="#000" stroke-width="2.10"/>
<line x1="1093.00" y1="963.11" x2="1083.00" y2="963.11" stroke="#000" stroke-width="2.10"/>
<line x1="239.90" y1="935.42" x2="245.90" y2="935.42" stroke="#000" stroke-width="1.60"/>
<line x1="1093.00" y1="935.42" x2="1087.00" y2="935.42" stroke="#000" stroke-width="1.60"/>
<line x1="239.90" y1="907.74" x2="245.90" y2="907.74" stroke="#000" stroke-width="1.60"/>
<line x1="1093.00" y1="907.74" x2="1087.00" y2="907.74" stroke="#000" stroke-width="1.60"/>
<line x1="239.90" y1="880.05" x2="245.90" y2="880.05" stroke="#000" stroke-width="1.60"/>
<line x1="1093.00" y1="880.05" x2="1087.00" y2="880.05" stroke="#000" stroke-width="1.60"/>
<line x1="239.90" y1="852.37" x2="245.90" y2="852.37" stroke="#000" stroke-width="1.60"/>
<line x1="1093.00" y1="852.37" x2="1087.00" y2="852.37" stroke="#000" stroke-width="1.60"/>
<line x1="239.90" y1="824.68" x2="249.90" y2="824.68" stroke="#000" stroke-width="2.10"/>
<line x1="1093.00" y1="824.68" x2="1083.00" y2="824.68" stroke="#000" stroke-width="2.10"/>
<line x1="239.90" y1="1375.62" x2="249.90" y2="1375.62" stroke="#000" stroke-width="2.10"/>
<line x1="1093.00" y1="1375.62" x2="1083.00" y2="1375.62" stroke="#000" stroke-width="2.10"/>
<rect x="239.90" y="797.00" width="853.10" height="580.00" fill="none" stroke="#000" stroke-width="2.10"/>
<text x="229.80" y="1386.02" font-size="27.78" text-anchor="end" fill="#000">1</text>
<text x="229.80" y="1250.36" font-size="27.78" text-anchor="end" fill="#000">50</text>
<text x="229.80" y="1111.93" font-size="27.78" text-anchor="end" fill="#000">100</text>
<text x="229.80" y="973.51" font-size="27.78" text-anchor="end" fill="#000">150</text>
<text x="229.80" y="835.08" font-size="27.78" text-anchor="end" fill="#000">200</text>
<text x="128.70" y="1102.60" font-size="27.78" text-anchor="middle" fill="#000" transform="rotate(-90 128.70 1102.60)">TOA Bin</text>
<text x="169.00" y="1420.90" font-size="27.78" text-anchor="end" fill="#000">UT</text>
<text x="250.20" y="1420.90" font-size="27.78" text-anchor="middle" fill="#000">23:59:52</text>
<text x="459.70" y="1420.90" font-size="27.78" text-anchor="middle" fill="#000">23:59:54</text>
<text x="669.20" y="1420.90" font-size="27.78" text-anchor="middle" fill="#000">23:59:56</text>
<text x="878.70" y="1420.90" font-size="27.78" text-anchor="middle" fill="#000">23:59:58</text>
<text x="1088.20" y="1420.90" font-size="27.78" text-anchor="middle" fill="#000">23:59:59</text>
<text x="169.00" y="1453.62" font-size="27.78" text-anchor="end" fill="#000">ALT (km)</text>
<text x="250.20" y="1453.62" font-size="27.78" text-anchor="middle" fill="#000">521.6</text>
<text x="459.70" y="1453.62" font-size="27.78" text-anchor="middle" fill="#000">522.2</text>
<text x="669.20" y="1453.62" font-size="27.78" text-anchor="middle" fill="#000">522.9</text>
<text x="878.70" y="1453.62" font-size="27.78" text-anchor="middle" fill="#000">523.5</text>
<text x="1088.20" y="1453.62" font-size="27.78" text-anchor="middle" fill="#000">524.2</text>
<text x="169.00" y="1486.34" font-size="27.78" text-anchor="end" fill="#000">LAT (deg)</text>
<text x="250.20" y="1486.34" font-size="27.78" text-anchor="middle" fill="#000">-38.7</text>
<text x="459.70" y="1486.34" font-size="27.78" text-anchor="middle" fill="#000">-38.6</text>
<text x="669.20" y="1486.34" font-size="27.78" text-anchor="middle" fill="#000">-38.4</text>
<text x="878.70" y="1486.34" font-size="27.78" text-anchor="middle" fill="#000">-38.3</text>
<text x="1088.20" y="1486.34" font-size="27.78" text-anchor="middle" fill="#000">-38.2</text>
<text x="169.00" y="1519.06" font-size="27.78" text-anchor="end" fill="#000">LON (deg)</text>
<text x="250.20" y="1519.06" font-size="27.78" text-anchor="middle" fill="#000">-43.5</text>
<text x="459.70" y="1519.06" font-size="27.78" text-anchor="middle" fill="#000">-43.5</text>
<text x="669.20" y="1519.06" font-size="27.78" text-anchor="middle" fill="#000">-43.5</text>
<text x="878.70" y="1519.06" font-size="27.78" text-anchor="middle" fill="#000">-43.5</text>
<text x="1088.20" y="1519.06" font-size="27.78" text-anchor="middle" fill="#000">-43.4</text>
<text x="169.00" y="1551.78" font-size="27.78" text-anchor="end" fill="#000">MLAT (deg)</text>
<text x="250.20" y="1551.78" font-size="27.78" text-anchor="middle" fill="#000">-30.3</text>
<text x="459.70" y="1551.78" font-size="27.78" text-anchor="middle" fill="#000">-30.2</text>
<text x="669.20" y="1551.78" font-size="27.78" text-anchor="middle" fill="#000">-30.0</text>
<text x="878.70" y="1551.78" font-size="27.78" text-anchor="middle" fill="#000">-29.9</text>
<text x="1088.20" y="1551.78" font-size="27.78" text-anchor="middle" fill="#000">-29.8</text>
<text x="169.00" y="1584.50" font-size="27.78" text-anchor="end" fill="#000">MLT (hrs)</text>
<text x="250.20" y="1584.50" font-size="27.78" text-anchor="middle" fill="#000">21.1</text>
<text x="459.70" y="1584.50" font-size="27.78" text-anchor="middle" fill="#000">21.1</text>
<text x="669.20" y="1584.50" font-size="27.78" text-anchor="middle" fill="#000">21.1</text>
<text x="878.70" y="1584.50" font-size="27.78" text-anchor="middle" fill="#000">21.1</text>
<text x="1088.20" y="1584.50" font-size="27.78" text-anchor="middle" fill="#000">21.1</text>
<rect x="1203.90" y="202.00" width="28.10" height="553.00" fill="url(#cbv)" stroke="none" stroke-width="0.00"/>
<line x1="1232.00" y1="271.12" x2="1222.00" y2="271.12" stroke="#000" stroke-width="2.10"/>
<line x1="1232.00" y1="340.25" x2="1222.00" y2="340.25" stroke="#000" stroke-width="2.10"/>
<line x1="1232.00" y1="409.38" x2="1222.00" y2="409.38" stroke="#000" stroke-width="2.10"/>
<line x1="1232.00" y1="478.50" x2="1222.00" y2="478.50" stroke="#000" stroke-width="2.10"/>
<line x1="1232.00" y1="547.62" x2="1222.00" y2="547.62" stroke="#000" stroke-width="2.10"/>
<line x1="1232.00" y1="616.75" x2="1222.00" y2="616.75" stroke="#000" stroke-width="2.10"/>
<line x1="1232.00" y1="685.88" x2="1222.00" y2="685.88" stroke="#000" stroke-width="2.10"/>
<rect x="1203.90" y="202.00" width="28.10" height="553.00" fill="none" stroke="#000" stroke-width="1.90"/>
<text x="1240.90" y="212.70" font-size="27.78" text-anchor="start" fill="#000">1e5</text>
<text x="1240.90" y="281.82" font-size="27.78" text-anchor="start" fill="#000">1e4</text>
<text x="1240.90" y="350.95" font-size="27.78" text-anchor="start" fill="#000">1e3</text>
<text x="1240.90" y="489.20" font-size="27.78" text-anchor="start" fill="#000">1e2</text>
<text x="1240.90" y="627.45" font-size="27.78" text-anchor="start" fill="#000">1e1</text>
<text x="1240.90" y="765.70" font-size="27.78" text-anchor="start" fill="#000">1e0</text>
<text x="1326.00" y="478.50" font-size="27.78" text-anchor="middle" fill="#000" transform="rotate(-90 1326.00 478.50)">Pixel Counts per Second</text>
<rect x="1203.90" y="811.00" width="28.10" height="552.90" fill="url(#cbv)" stroke="none" stroke-width="0.00"/>
<line x1="1232.00" y1="880.11" x2="1222.00" y2="880.11" stroke="#000" stroke-width="2.10"/>
<line x1="1232.00" y1="949.23" x2="1222.00" y2="949.23" stroke="#000" stroke-width="2.10"/>
<line x1="1232.00" y1="1018.34" x2="1222.00" y2="1018.34" stroke="#000" stroke-width="2.10"/>
<line x1="1232.00" y1="1087.45" x2="1222.00" y2="1087.45" stroke="#000" stroke-width="2.10"/>
<line x1="1232.00" y1="1156.56" x2="1222.00" y2="1156.56" stroke="#000" stroke-width="2.10"/>
<line x1="1232.00" y1="1225.68" x2="1222.00" y2="1225.68" stroke="#000" stroke-width="2.10"/>
<line x1="1232.00" y1="1294.79" x2="1222.00" y2="1294.79" stroke="#000" stroke-width="2.10"/>
<rect x="1203.90" y="811.00" width="28.10" height="552.90" fill="none" stroke="#000" stroke-width="1.90"/>
<text x="1240.90" y="821.70" font-size="27.78" text-anchor="start" fill="#000">1e5</text>
<text x="1240.90" y="890.81" font-size="27.78" text-anchor="start" fill="#000">1e4</text>
<text x="1240.90" y="959.93" font-size="27.78" text-anchor="start" fill="#000">1e3</text>
<text x="1240.90" y="1098.15" font-size="27.78" text-anchor="start" fill="#000">1e2</text>
<text x="1240.90" y="1236.38" font-size="27.78" text-anchor="start" fill="#000">1e1</text>
<text x="1240.90" y="1374.60" font-size="27.78" text-anchor="start" fill="#000">1e0</text>
<text x="1326.00" y="1087.45" font-size="27.78" text-anchor="middle" fill="#000" transform="rotate(-90 1326.00 1087.45)">TOF Counts per Second</text>
<polygon points="1544.0,191.9 2204.5,191.9 2328.2,317.5 2205.5,437.9 1544.0,437.9" fill="#c5c9c7"/>
<line x1="1593.01" y1="437.90" x2="1593.01" y2="191.90" stroke="#808080" stroke-width="2.08" stroke-dasharray="2.08 3.44"/>
<line x1="1642.03" y1="437.90" x2="1642.03" y2="191.90" stroke="#808080" stroke-width="2.08" stroke-dasharray="2.08 3.44"/>
<line x1="1691.04" y1="437.90" x2="1691.04" y2="191.90" stroke="#808080" stroke-width="2.08" stroke-dasharray="2.08 3.44"/>
<line x1="1740.05" y1="437.90" x2="1740.05" y2="191.90" stroke="#808080" stroke-width="4.17" stroke-dasharray="4.17 6.88"/>
<line x1="1789.06" y1="437.90" x2="1789.06" y2="191.90" stroke="#808080" stroke-width="2.08" stroke-dasharray="2.08 3.44"/>
<line x1="1838.07" y1="437.90" x2="1838.07" y2="191.90" stroke="#808080" stroke-width="2.08" stroke-dasharray="2.08 3.44"/>
<line x1="1887.09" y1="437.90" x2="1887.09" y2="191.90" stroke="#808080" stroke-width="2.08" stroke-dasharray="2.08 3.44"/>
<line x1="1936.10" y1="437.90" x2="1936.10" y2="191.90" stroke="#808080" stroke-width="4.17" stroke-dasharray="4.17 6.88"/>
<line x1="1985.11" y1="437.90" x2="1985.11" y2="191.90" stroke="#808080" stroke-width="2.08" stroke-dasharray="2.08 3.44"/>
<line x1="2034.12" y1="437.90" x2="2034.12" y2="191.90" stroke="#808080" stroke-width="2.08" stroke-dasharray="2.08 3.44"/>
<line x1="2083.14" y1="437.90" x2="2083.14" y2="191.90" stroke="#808080" stroke-width="2.08" stroke-dasharray="2.08 3.44"/>
<line x1="2132.15" y1="437.90" x2="2132.15" y2="191.90" stroke="#808080" stroke-width="4.17" stroke-dasharray="4.17 6.88"/>
<line x1="2181.16" y1="437.90" x2="2181.16" y2="191.90" stroke="#808080" stroke-width="2.08" stroke-dasharray="2.08 3.44"/>
<line x1="2230.17" y1="437.90" x2="2230.17" y2="191.90" stroke="#808080" stroke-width="2.08" stroke-dasharray="2.08 3.44"/>
<line x1="2279.19" y1="437.90" x2="2279.19" y2="191.90" stroke="#808080" stroke-width="2.08" stroke-dasharray="2.08 3.44"/>
<line x1="1544.00" y1="301.20" x2="1999.00" y2="299.80" stroke="#0000ff" stroke-width="2.00"/>
<line x1="1544.00" y1="311.80" x2="1999.00" y2="311.80" stroke="#000" stroke-width="2.60"/>
<line x1="1593.01" y1="437.90" x2="1593.01" y2="431.90" stroke="#000" stroke-width="1.60"/>
<line x1="1593.01" y1="191.90" x2="1593.01" y2="197.90" stroke="#000" stroke-width="1.60"/>
<line x1="1642.03" y1="437.90" x2="1642.03" y2="431.90" stroke="#000" stroke-width="1.60"/>
<line x1="1642.03" y1="191.90" x2="1642.03" y2="197.90" stroke="#000" stroke-width="1.60"/>
<line x1="1691.04" y1="437.90" x2="1691.04" y2="431.90" stroke="#000" stroke-width="1.60"/>
<line x1="1691.04" y1="191.90" x2="1691.04" y2="197.90" stroke="#000" stroke-width="1.60"/>
<line x1="1740.05" y1="437.90" x2="1740.05" y2="427.90" stroke="#000" stroke-width="2.10"/>
<line x1="1740.05" y1="191.90" x2="1740.05" y2="201.90" stroke="#000" stroke-width="2.10"/>
<line x1="1789.06" y1="437.90" x2="1789.06" y2="431.90" stroke="#000" stroke-width="1.60"/>
<line x1="1789.06" y1="191.90" x2="1789.06" y2="197.90" stroke="#000" stroke-width="1.60"/>
<line x1="1838.07" y1="437.90" x2="1838.07" y2="431.90" stroke="#000" stroke-width="1.60"/>
<line x1="1838.07" y1="191.90" x2="1838.07" y2="197.90" stroke="#000" stroke-width="1.60"/>
<line x1="1887.09" y1="437.90" x2="1887.09" y2="431.90" stroke="#000" stroke-width="1.60"/>
<line x1="1887.09" y1="191.90" x2="1887.09" y2="197.90" stroke="#000" stroke-width="1.60"/>
<line x1="1936.10" y1="437.90" x2="1936.10" y2="427.90" stroke="#000" stroke-width="2.10"/>
<line x1="1936.10" y1="191.90" x2="1936.10" y2="201.90" stroke="#000" stroke-width="2.10"/>
<line x1="1985.11" y1="437.90" x2="1985.11" y2="431.90" stroke="#000" stroke-width="1.60"/>
<line x1="1985.11" y1="191.90" x2="1985.11" y2="197.90" stroke="#000" stroke-width="1.60"/>
<line x1="2034.12" y1="437.90" x2="2034.12" y2="431.90" stroke="#000" stroke-width="1.60"/>
<line x1="2034.12" y1="191.90" x2="2034.12" y2="197.90" stroke="#000" stroke-width="1.60"/>
<line x1="2083.14" y1="437.90" x2="2083.14" y2="431.90" stroke="#000" stroke-width="1.60"/>
<line x1="2083.14" y1="191.90" x2="2083.14" y2="197.90" stroke="#000" stroke-width="1.60"/>
<line x1="2132.15" y1="437.90" x2="2132.15" y2="427.90" stroke="#000" stroke-width="2.10"/>
<line x1="2132.15" y1="191.90" x2="2132.15" y2="201.90" stroke="#000" stroke-width="2.10"/>
<line x1="2181.16" y1="437.90" x2="2181.16" y2="431.90" stroke="#000" stroke-width="1.60"/>
<line x1="2181.16" y1="191.90" x2="2181.16" y2="197.90" stroke="#000" stroke-width="1.60"/>
<line x1="2230.17" y1="437.90" x2="2230.17" y2="431.90" stroke="#000" stroke-width="1.60"/>
<line x1="2230.17" y1="191.90" x2="2230.17" y2="197.90" stroke="#000" stroke-width="1.60"/>
<line x1="2279.19" y1="437.90" x2="2279.19" y2="431.90" stroke="#000" stroke-width="1.60"/>
<line x1="2279.19" y1="191.90" x2="2279.19" y2="197.90" stroke="#000" stroke-width="1.60"/>
<line x1="1544.00" y1="426.97" x2="1554.00" y2="426.97" stroke="#000" stroke-width="2.10"/>
<line x1="2328.20" y1="426.97" x2="2318.20" y2="426.97" stroke="#000" stroke-width="2.10"/>
<line x1="1544.00" y1="415.77" x2="1550.00" y2="415.77" stroke="#000" stroke-width="1.60"/>
<line x1="2328.20" y1="415.77" x2="2322.20" y2="415.77" stroke="#000" stroke-width="1.60"/>
<line x1="1544.00" y1="404.57" x2="1550.00" y2="404.57" stroke="#000" stroke-width="1.60"/>
<line x1="2328.20" y1="404.57" x2="2322.20" y2="404.57" stroke="#000" stroke-width="1.60"/>
<line x1="1544.00" y1="393.37" x2="1550.00" y2="393.37" stroke="#000" stroke-width="1.60"/>
<line x1="2328.20" y1="393.37" x2="2322.20" y2="393.37" stroke="#000" stroke-width="1.60"/>
<line x1="1544.00" y1="382.17" x2="1550.00" y2="382.17" stroke="#000" stroke-width="1.60"/>
<line x1="2328.20" y1="382.17" x2="2322.20" y2="382.17" stroke="#000" stroke-width="1.60"/>
<line x1="1544.00" y1="370.97" x2="1554.00" y2="370.97" stroke="#000" stroke-width="2.10"/>
<line x1="2328.20" y1="370.97" x2="2318.20" y2="370.97" stroke="#000" stroke-width="2.10"/>
<line x1="1544.00" y1="359.77" x2="1550.00" y2="359.77" stroke="#000" stroke-width="1.60"/>
<line x1="2328.20" y1="359.77" x2="2322.20" y2="359.77" stroke="#000" stroke-width="1.60"/>
<line x1="1544.00" y1="348.57" x2="1550.00" y2="348.57" stroke="#000" stroke-width="1.60"/>
<line x1="2328.20" y1="348.57" x2="2322.20" y2="348.57" stroke="#000" stroke-width="1.60"/>
<line x1="1544.00" y1="337.37" x2="1550.00" y2="337.37" stroke="#000" stroke-width="1.60"/>
<line x1="2328.20" y1="337.37" x2="2322.20" y2="337.37" stroke="#000" stroke-width="1.60"/>
<line x1="1544.00" y1="326.17" x2="1550.00" y2="326.17" stroke="#000" stroke-width="1.60"/>
<line x1="2328.20" y1="326.17" x2="2322.20" y2="326.17" stroke="#000" stroke-width="1.60"/>
<line x1="1544.00" y1="314.97" x2="1554.00" y2="314.97" stroke="#000" stroke-width="2.10"/>
<line x1="2328.20" y1="314.97" x2="2318.20" y2="314.97" stroke="#000" stroke-width="2.10"/>
<line x1="1544.00" y1="303.77" x2="1550.00" y2="303.77" stroke="#000" stroke-width="1.60"/>
<line x1="2328.20" y1="303.77" x2="2322.20" y2="303.77" stroke="#000" stroke-width="1.60"/>
<line x1="1544.00" y1="292.57" x2="1550.00" y2="292.57" stroke="#000" stroke-width="1.60"/>
<line x1="2328.20" y1="292.57" x2="2322.20" y2="292.57" stroke="#000" stroke-width="1.60"/>
<line x1="1544.00" y1="281.37" x2="1550.00" y2="281.37" stroke="#000" stroke-width="1.60"/>
<line x1="2328.20" y1="281.37" x2="2322.20" y2="281.37" stroke="#000" stroke-width="1.60"/>
<line x1="1544.00" y1="270.17" x2="1550.00" y2="270.17" stroke="#000" stroke-width="1.60"/>
<line x1="2328.20" y1="270.17" x2="2322.20" y2="270.17" stroke="#000" stroke-width="1.60"/>
<line x1="1544.00" y1="258.97" x2="1554.00" y2="258.97" stroke="#000" stroke-width="2.10"/>
<line x1="2328.20" y1="258.97" x2="2318.20" y2="258.97" stroke="#000" stroke-width="2.10"/>
<line x1="1544.00" y1="247.77" x2="1550.00" y2="247.77" stroke="#000" stroke-width="1.60"/>
<line x1="2328.20" y1="247.77" x2="2322.20" y2="247.77" stroke="#000" stroke-width="1.60"/>
<line x1="1544.00" y1="236.57" x2="1550.00" y2="236.57" stroke="#000" stroke-width="1.60"/>
<line x1="2328.20" y1="236.57" x2="2322.20" y2="236.57" stroke="#000" stroke-width="1.60"/>
<line x1="1544.00" y1="225.37" x2="1550.00" y2="225.37" stroke="#000" stroke-width="1.60"/>
<line x1="2328.20" y1="225.37" x2="2322.20" y2="225.37" stroke="#000" stroke-width="1.60"/>
<line x1="1544.00" y1="214.17" x2="1550.00" y2="214.17" stroke="#000" stroke-width="1.60"/>
<line x1="2328.20" y1="214.17" x2="2322.20" y2="214.17" stroke="#000" stroke-width="1.60"/>
<line x1="1544.00" y1="202.97" x2="1554.00" y2="202.97" stroke="#000" stroke-width="2.10"/>
<line x1="2328.20" y1="202.97" x2="2318.20" y2="202.97" stroke="#000" stroke-width="2.10"/>
<rect x="1544.00" y="191.90" width="784.20" height="246.00" fill="none" stroke="#000" stroke-width="2.10"/>
<text x="1534.20" y="437.87" font-size="27.78" text-anchor="end" fill="#000">−10</text>
<text x="1534.20" y="381.87" font-size="27.78" text-anchor="end" fill="#000">−5</text>
<text x="1534.20" y="325.87" font-size="27.78" text-anchor="end" fill="#000">0</text>
<text x="1534.20" y="269.87" font-size="27.78" text-anchor="end" fill="#000">5</text>
<text x="1534.20" y="213.87" font-size="27.78" text-anchor="end" fill="#000">10</text>
<text x="1458.50" y="315.50" font-size="27.78" text-anchor="middle" fill="#000" transform="rotate(-90 1458.50 315.50)">Current (uA)</text>
<text x="2336.30" y="181.00" font-size="20.83" text-anchor="start" fill="#000" transform="rotate(90 2336.30 181.00)">Sensor Surface Current</text>
<text x="2356.50" y="181.00" font-size="20.83" text-anchor="start" fill="#0000ff" transform="rotate(90 2356.50 181.00)">Sensor Surface Current x 5</text>
<rect x="1607.20" y="154.00" width="55.60" height="19.00" fill="#c5c9c7" stroke="none" stroke-width="0.00"/>
<text x="1685.30" y="173.30" font-size="27.78" text-anchor="start" fill="#000">S/C in Eclipse</text>
<g stroke="#808080" stroke-width="2.6" fill="none"><path d="M1927.8 173.0 L1944.6 154.8 M1959.3 173.0 L1978.6 154.6"/></g>
<rect x="1927.40" y="154.20" width="56.20" height="19.00" fill="none" stroke="#808080" stroke-width="1.40"/>
<text x="2004.20" y="173.30" font-size="27.78" text-anchor="start" fill="#000">IRM in S/C Shadow</text>
<rect x="1544.00" y="462.90" width="659.00" height="244.90" fill="#c5c9c7" stroke="none" stroke-width="0.00"/>
<line x1="1593.01" y1="707.80" x2="1593.01" y2="462.90" stroke="#808080" stroke-width="2.08" stroke-dasharray="2.08 3.44"/>
<line x1="1642.03" y1="707.80" x2="1642.03" y2="462.90" stroke="#808080" stroke-width="2.08" stroke-dasharray="2.08 3.44"/>
<line x1="1691.04" y1="707.80" x2="1691.04" y2="462.90" stroke="#808080" stroke-width="2.08" stroke-dasharray="2.08 3.44"/>
<line x1="1740.05" y1="707.80" x2="1740.05" y2="462.90" stroke="#808080" stroke-width="4.17" stroke-dasharray="4.17 6.88"/>
<line x1="1789.06" y1="707.80" x2="1789.06" y2="462.90" stroke="#808080" stroke-width="2.08" stroke-dasharray="2.08 3.44"/>
<line x1="1838.07" y1="707.80" x2="1838.07" y2="462.90" stroke="#808080" stroke-width="2.08" stroke-dasharray="2.08 3.44"/>
<line x1="1887.09" y1="707.80" x2="1887.09" y2="462.90" stroke="#808080" stroke-width="2.08" stroke-dasharray="2.08 3.44"/>
<line x1="1936.10" y1="707.80" x2="1936.10" y2="462.90" stroke="#808080" stroke-width="4.17" stroke-dasharray="4.17 6.88"/>
<line x1="1985.11" y1="707.80" x2="1985.11" y2="462.90" stroke="#808080" stroke-width="2.08" stroke-dasharray="2.08 3.44"/>
<line x1="2034.12" y1="707.80" x2="2034.12" y2="462.90" stroke="#808080" stroke-width="2.08" stroke-dasharray="2.08 3.44"/>
<line x1="2083.14" y1="707.80" x2="2083.14" y2="462.90" stroke="#808080" stroke-width="2.08" stroke-dasharray="2.08 3.44"/>
<line x1="2132.15" y1="707.80" x2="2132.15" y2="462.90" stroke="#808080" stroke-width="4.17" stroke-dasharray="4.17 6.88"/>
<line x1="2181.16" y1="707.80" x2="2181.16" y2="462.90" stroke="#808080" stroke-width="2.08" stroke-dasharray="2.08 3.44"/>
<line x1="2230.17" y1="707.80" x2="2230.17" y2="462.90" stroke="#808080" stroke-width="2.08" stroke-dasharray="2.08 3.44"/>
<line x1="2279.19" y1="707.80" x2="2279.19" y2="462.90" stroke="#808080" stroke-width="2.08" stroke-dasharray="2.08 3.44"/>
<line x1="1593.01" y1="707.80" x2="1593.01" y2="701.80" stroke="#000" stroke-width="1.60"/>
<line x1="1593.01" y1="462.90" x2="1593.01" y2="468.90" stroke="#000" stroke-width="1.60"/>
<line x1="1642.03" y1="707.80" x2="1642.03" y2="701.80" stroke="#000" stroke-width="1.60"/>
<line x1="1642.03" y1="462.90" x2="1642.03" y2="468.90" stroke="#000" stroke-width="1.60"/>
<line x1="1691.04" y1="707.80" x2="1691.04" y2="701.80" stroke="#000" stroke-width="1.60"/>
<line x1="1691.04" y1="462.90" x2="1691.04" y2="468.90" stroke="#000" stroke-width="1.60"/>
<line x1="1740.05" y1="707.80" x2="1740.05" y2="697.80" stroke="#000" stroke-width="2.10"/>
<line x1="1740.05" y1="462.90" x2="1740.05" y2="472.90" stroke="#000" stroke-width="2.10"/>
<line x1="1789.06" y1="707.80" x2="1789.06" y2="701.80" stroke="#000" stroke-width="1.60"/>
<line x1="1789.06" y1="462.90" x2="1789.06" y2="468.90" stroke="#000" stroke-width="1.60"/>
<line x1="1838.07" y1="707.80" x2="1838.07" y2="701.80" stroke="#000" stroke-width="1.60"/>
<line x1="1838.07" y1="462.90" x2="1838.07" y2="468.90" stroke="#000" stroke-width="1.60"/>
<line x1="1887.09" y1="707.80" x2="1887.09" y2="701.80" stroke="#000" stroke-width="1.60"/>
<line x1="1887.09" y1="462.90" x2="1887.09" y2="468.90" stroke="#000" stroke-width="1.60"/>
<line x1="1936.10" y1="707.80" x2="1936.10" y2="697.80" stroke="#000" stroke-width="2.10"/>
<line x1="1936.10" y1="462.90" x2="1936.10" y2="472.90" stroke="#000" stroke-width="2.10"/>
<line x1="1985.11" y1="707.80" x2="1985.11" y2="701.80" stroke="#000" stroke-width="1.60"/>
<line x1="1985.11" y1="462.90" x2="1985.11" y2="468.90" stroke="#000" stroke-width="1.60"/>
<line x1="2034.12" y1="707.80" x2="2034.12" y2="701.80" stroke="#000" stroke-width="1.60"/>
<line x1="2034.12" y1="462.90" x2="2034.12" y2="468.90" stroke="#000" stroke-width="1.60"/>
<line x1="2083.14" y1="707.80" x2="2083.14" y2="701.80" stroke="#000" stroke-width="1.60"/>
<line x1="2083.14" y1="462.90" x2="2083.14" y2="468.90" stroke="#000" stroke-width="1.60"/>
<line x1="2132.15" y1="707.80" x2="2132.15" y2="697.80" stroke="#000" stroke-width="2.10"/>
<line x1="2132.15" y1="462.90" x2="2132.15" y2="472.90" stroke="#000" stroke-width="2.10"/>
<line x1="2181.16" y1="707.80" x2="2181.16" y2="701.80" stroke="#000" stroke-width="1.60"/>
<line x1="2181.16" y1="462.90" x2="2181.16" y2="468.90" stroke="#000" stroke-width="1.60"/>
<line x1="2230.17" y1="707.80" x2="2230.17" y2="701.80" stroke="#000" stroke-width="1.60"/>
<line x1="2230.17" y1="462.90" x2="2230.17" y2="468.90" stroke="#000" stroke-width="1.60"/>
<line x1="2279.19" y1="707.80" x2="2279.19" y2="701.80" stroke="#000" stroke-width="1.60"/>
<line x1="2279.19" y1="462.90" x2="2279.19" y2="468.90" stroke="#000" stroke-width="1.60"/>
<line x1="1544.00" y1="705.90" x2="1554.00" y2="705.90" stroke="#000" stroke-width="2.10"/>
<line x1="2328.20" y1="705.90" x2="2318.20" y2="705.90" stroke="#000" stroke-width="2.10"/>
<line x1="1544.00" y1="693.75" x2="1550.00" y2="693.75" stroke="#000" stroke-width="1.60"/>
<line x1="2328.20" y1="693.75" x2="2322.20" y2="693.75" stroke="#000" stroke-width="1.60"/>
<line x1="1544.00" y1="681.60" x2="1550.00" y2="681.60" stroke="#000" stroke-width="1.60"/>
<line x1="2328.20" y1="681.60" x2="2322.20" y2="681.60" stroke="#000" stroke-width="1.60"/>
<line x1="1544.00" y1="669.45" x2="1550.00" y2="669.45" stroke="#000" stroke-width="1.60"/>
<line x1="2328.20" y1="669.45" x2="2322.20" y2="669.45" stroke="#000" stroke-width="1.60"/>
<line x1="1544.00" y1="657.30" x2="1550.00" y2="657.30" stroke="#000" stroke-width="1.60"/>
<line x1="2328.20" y1="657.30" x2="2322.20" y2="657.30" stroke="#000" stroke-width="1.60"/>
<line x1="1544.00" y1="645.15" x2="1554.00" y2="645.15" stroke="#000" stroke-width="2.10"/>
<line x1="2328.20" y1="645.15" x2="2318.20" y2="645.15" stroke="#000" stroke-width="2.10"/>
<line x1="1544.00" y1="633.00" x2="1550.00" y2="633.00" stroke="#000" stroke-width="1.60"/>
<line x1="2328.20" y1="633.00" x2="2322.20" y2="633.00" stroke="#000" stroke-width="1.60"/>
<line x1="1544.00" y1="620.85" x2="1550.00" y2="620.85" stroke="#000" stroke-width="1.60"/>
<line x1="2328.20" y1="620.85" x2="2322.20" y2="620.85" stroke="#000" stroke-width="1.60"/>
<line x1="1544.00" y1="608.70" x2="1550.00" y2="608.70" stroke="#000" stroke-width="1.60"/>
<line x1="2328.20" y1="608.70" x2="2322.20" y2="608.70" stroke="#000" stroke-width="1.60"/>
<line x1="1544.00" y1="596.55" x2="1550.00" y2="596.55" stroke="#000" stroke-width="1.60"/>
<line x1="2328.20" y1="596.55" x2="2322.20" y2="596.55" stroke="#000" stroke-width="1.60"/>
<line x1="1544.00" y1="584.40" x2="1554.00" y2="584.40" stroke="#000" stroke-width="2.10"/>
<line x1="2328.20" y1="584.40" x2="2318.20" y2="584.40" stroke="#000" stroke-width="2.10"/>
<line x1="1544.00" y1="572.25" x2="1550.00" y2="572.25" stroke="#000" stroke-width="1.60"/>
<line x1="2328.20" y1="572.25" x2="2322.20" y2="572.25" stroke="#000" stroke-width="1.60"/>
<line x1="1544.00" y1="560.10" x2="1550.00" y2="560.10" stroke="#000" stroke-width="1.60"/>
<line x1="2328.20" y1="560.10" x2="2322.20" y2="560.10" stroke="#000" stroke-width="1.60"/>
<line x1="1544.00" y1="547.95" x2="1550.00" y2="547.95" stroke="#000" stroke-width="1.60"/>
<line x1="2328.20" y1="547.95" x2="2322.20" y2="547.95" stroke="#000" stroke-width="1.60"/>
<line x1="1544.00" y1="535.80" x2="1550.00" y2="535.80" stroke="#000" stroke-width="1.60"/>
<line x1="2328.20" y1="535.80" x2="2322.20" y2="535.80" stroke="#000" stroke-width="1.60"/>
<line x1="1544.00" y1="523.65" x2="1554.00" y2="523.65" stroke="#000" stroke-width="2.10"/>
<line x1="2328.20" y1="523.65" x2="2318.20" y2="523.65" stroke="#000" stroke-width="2.10"/>
<line x1="1544.00" y1="511.50" x2="1550.00" y2="511.50" stroke="#000" stroke-width="1.60"/>
<line x1="2328.20" y1="511.50" x2="2322.20" y2="511.50" stroke="#000" stroke-width="1.60"/>
<line x1="1544.00" y1="499.35" x2="1550.00" y2="499.35" stroke="#000" stroke-width="1.60"/>
<line x1="2328.20" y1="499.35" x2="2322.20" y2="499.35" stroke="#000" stroke-width="1.60"/>
<line x1="1544.00" y1="487.20" x2="1550.00" y2="487.20" stroke="#000" stroke-width="1.60"/>
<line x1="2328.20" y1="487.20" x2="2322.20" y2="487.20" stroke="#000" stroke-width="1.60"/>
<line x1="1544.00" y1="475.05" x2="1550.00" y2="475.05" stroke="#000" stroke-width="1.60"/>
<line x1="2328.20" y1="475.05" x2="2322.20" y2="475.05" stroke="#000" stroke-width="1.60"/>
<line x1="1544.00" y1="462.90" x2="1554.00" y2="462.90" stroke="#000" stroke-width="2.10"/>
<line x1="2328.20" y1="462.90" x2="2318.20" y2="462.90" stroke="#000" stroke-width="2.10"/>
<line x1="1544.00" y1="705.90" x2="1999.00" y2="705.90" stroke="#0000ff" stroke-width="2.10"/>
<rect x="1544.00" y="462.90" width="784.20" height="244.90" fill="none" stroke="#000" stroke-width="2.10"/>
<text x="1533.60" y="716.80" font-size="27.78" text-anchor="end" fill="#000">0.00</text>
<text x="1533.60" y="656.05" font-size="27.78" text-anchor="end" fill="#000">0.25</text>
<text x="1533.60" y="595.30" font-size="27.78" text-anchor="end" fill="#000">0.50</text>
<text x="1533.60" y="534.55" font-size="27.78" text-anchor="end" fill="#000">0.75</text>
<text x="1533.60" y="473.80" font-size="27.78" text-anchor="end" fill="#000">1.00</text>
<text x="1430.50" y="599.00" font-size="27.78" text-anchor="middle" fill="#000" transform="rotate(-90 1430.50 599.00)">Counts Per</text>
<text x="1458.5" y="598" font-size="27.78" text-anchor="middle" transform="rotate(-90 1458.5 598)">Second (x10<tspan font-size="19.44" dy="-10.5">3</tspan><tspan dy="10.5">)</tspan></text>
<text x="2337.90" y="488.00" font-size="22.22" text-anchor="start" fill="#000" transform="rotate(90 2337.90 488.00)">Hit Counter</text>
<text x="2360.90" y="488.00" font-size="22.22" text-anchor="start" fill="#0000ff" transform="rotate(90 2360.90 488.00)">Detect Counter</text>
<text x="1544.00" y="752.40" font-size="27.78" text-anchor="middle" fill="#000">23:59:52</text>
<text x="1740.05" y="752.40" font-size="27.78" text-anchor="middle" fill="#000">23:59:54</text>
<text x="1936.10" y="752.40" font-size="27.78" text-anchor="middle" fill="#000">23:59:56</text>
<text x="2132.15" y="752.40" font-size="27.78" text-anchor="middle" fill="#000">23:59:58</text>
<text x="2328.20" y="752.40" font-size="27.78" text-anchor="middle" fill="#000">23:59:59</text>
<defs>
<clipPath id="mapclip"><path d="M1669.8 795.0L2143.2 795.0A236.8 236.0 0 0 1 2143.2 1267.0L1669.8 1267.0A236.8 236.0 0 0 1 1669.8 795.0Z"/></clipPath>
<clipPath id="landclip"><path d="M1534.0 859.2L1546.0 851.9L1560.1 846.9L1575.0 844.0L1586.6 846.1L1603.7 848.2L1614.9 850.1L1632.8 846.9L1648.4 848.8L1656.2 852.7L1671.4 852.7L1688.8 852.7L1700.5 851.4L1709.0 844.8L1712.1 850.1L1721.5 852.7L1730.5 850.1L1726.0 856.6L1713.6 859.2L1709.4 863.2L1695.5 868.4L1688.3 876.3L1690.7 881.5L1700.1 884.2L1712.1 886.8L1711.5 892.0L1714.8 896.5L1717.8 894.6L1719.9 888.1L1725.9 884.2L1725.9 877.6L1731.2 867.1L1740.9 868.4L1746.7 871.0L1747.2 876.3L1757.3 873.7L1758.0 878.9L1763.5 884.2L1770.4 889.4L1773.4 894.6L1762.0 899.9L1747.6 899.4L1739.3 903.8L1749.3 902.5L1749.3 907.8L1757.3 910.4L1749.2 914.3L1743.7 916.9L1742.1 913.0L1733.8 916.9L1731.7 921.4L1722.3 924.8L1717.4 930.0L1715.4 934.0L1715.8 938.7L1708.9 941.8L1700.4 947.1L1698.8 952.3L1700.9 960.2L1699.5 964.9L1695.9 962.8L1694.1 957.6L1691.9 952.3L1686.9 951.5L1679.2 951.8L1676.1 955.0L1667.4 953.1L1657.7 957.6L1655.1 965.4L1653.3 972.0L1656.8 981.2L1660.5 983.3L1668.4 982.5L1671.7 975.9L1681.0 974.6L1678.9 981.2L1676.7 985.1L1674.7 989.6L1683.4 989.0L1689.2 991.7L1687.4 1002.2L1690.0 1006.9L1696.6 1006.9L1699.3 1006.1L1703.6 1008.7L1701.6 1012.1L1696.4 1011.9L1693.8 1010.0L1688.6 1009.2L1683.6 1004.8L1681.2 1000.8L1677.5 996.9L1671.1 994.8L1664.8 992.2L1658.6 989.0L1653.3 989.6L1645.8 986.4L1636.0 981.2L1632.6 977.2L1633.4 972.0L1628.0 965.4L1623.8 960.2L1618.7 953.6L1617.3 948.9L1614.3 948.4L1613.9 952.3L1617.6 958.9L1620.5 964.1L1623.3 970.2L1620.8 969.9L1617.7 965.4L1613.8 958.9L1611.2 953.1L1609.1 945.8L1606.3 941.8L1601.6 940.5L1599.6 934.5L1597.4 927.4L1598.7 920.9L1603.2 910.4L1604.1 904.3L1609.0 902.5L1601.8 897.3L1599.4 888.1L1596.2 881.5L1590.5 877.6L1584.7 874.2L1572.9 871.6L1562.2 873.7L1554.7 877.6L1545.8 880.2L1536.9 882.8L1523.6 886.8L1533.6 881.0L1540.8 877.6L1532.5 876.3L1529.9 871.0L1532.2 865.8L1545.9 863.2L1538.1 861.9Z M1703.6 1008.7L1708.6 1002.7L1717.9 999.5L1719.1 1002.2L1723.2 999.0L1728.3 1002.7L1738.7 1003.5L1744.5 1002.9L1749.0 1008.7L1756.7 1015.3L1769.8 1018.4L1775.0 1028.4L1778.9 1033.6L1789.5 1037.6L1801.3 1038.3L1809.2 1044.1L1814.5 1046.7L1815.1 1052.0L1809.6 1061.2L1804.5 1067.7L1804.9 1076.9L1801.4 1086.1L1797.9 1091.3L1790.2 1093.4L1781.6 1099.2L1781.4 1105.7L1776.4 1112.3L1771.0 1120.2L1765.0 1122.8L1758.4 1120.7L1762.9 1126.2L1761.6 1131.2L1751.5 1133.3L1751.6 1138.5L1744.9 1138.5L1748.8 1143.2L1745.7 1149.0L1741.4 1151.6L1746.4 1155.6L1740.6 1163.4L1743.6 1168.1L1752.0 1174.7L1746.7 1176.5L1738.4 1172.6L1729.7 1167.4L1723.2 1156.9L1724.9 1149.0L1724.3 1141.1L1721.4 1130.6L1723.3 1122.8L1724.2 1112.3L1723.6 1104.4L1724.6 1091.3L1723.8 1079.5L1718.8 1075.6L1707.8 1067.7L1703.5 1061.2L1697.7 1050.7L1693.1 1046.7L1693.5 1042.3L1696.1 1038.9L1694.0 1036.8L1696.1 1029.7L1699.2 1027.1L1702.7 1020.5L1703.5 1012.6Z M1891.9 937.1L1901.4 938.7L1914.0 934.5L1931.6 933.5L1934.3 939.2L1932.6 941.8L1935.7 943.9L1944.6 946.3L1956.3 951.5L1957.3 945.8L1964.9 945.3L1970.2 947.9L1980.5 949.7L1988.8 949.2L1989.5 952.3L1993.9 960.2L1998.2 968.1L2003.0 975.9L2004.1 982.5L2009.6 990.4L2019.0 997.7L2019.9 1000.8L2024.5 1003.5L2032.3 1001.6L2040.6 1000.1L2040.2 1003.7L2035.2 1012.6L2031.4 1020.5L2022.2 1028.4L2015.7 1036.2L2010.3 1043.3L2008.9 1049.4L2010.8 1058.5L2012.8 1070.3L2005.5 1076.4L1997.4 1083.4L1998.2 1093.9L1991.5 1098.7L1990.6 1105.7L1984.3 1112.3L1974.9 1119.6L1962.2 1120.9L1957.1 1122.3L1952.9 1120.2L1952.3 1114.9L1948.8 1106.3L1945.1 1099.2L1944.0 1090.0L1937.7 1078.2L1937.3 1071.6L1941.8 1063.8L1940.6 1054.6L1938.6 1046.7L1935.4 1041.0L1930.2 1033.6L1931.5 1028.4L1932.0 1021.8L1929.6 1019.2L1922.3 1019.7L1918.3 1014.7L1910.4 1014.7L1901.2 1018.4L1894.7 1017.4L1886.8 1019.5L1882.3 1017.4L1876.3 1012.9L1871.9 1007.9L1867.2 1002.2L1862.5 998.2L1860.8 992.5L1863.5 987.7L1864.4 979.9L1862.4 975.9L1865.1 969.4L1869.2 962.8L1873.1 958.1L1878.3 955.7L1881.5 952.3L1882.3 947.1L1888.8 942.4Z M1892.6 936.6L1884.4 934.0L1883.2 929.5L1884.7 921.4L1883.8 917.7L1886.8 916.4L1896.6 917.2L1902.1 917.2L1903.6 910.4L1900.4 907.0L1895.1 904.3L1902.4 903.3L1902.9 900.7L1907.0 901.2L1910.6 897.5L1914.9 896.2L1917.7 892.0L1923.1 890.7L1927.1 889.4L1926.0 885.5L1925.6 881.5L1930.9 879.7L1930.4 884.2L1932.0 888.6L1934.9 888.9L1940.4 889.4L1950.2 887.6L1955.9 886.3L1956.0 881.5L1961.3 881.5L1962.6 878.1L1960.7 875.8L1969.8 875.0L1975.4 873.7L1971.7 872.1L1963.8 873.1L1958.2 873.7L1955.6 871.0L1954.5 865.8L1962.1 860.6L1959.6 858.5L1955.3 859.2L1954.5 861.9L1946.1 867.1L1945.8 871.0L1949.7 873.7L1944.9 880.2L1944.0 883.6L1940.1 885.5L1936.6 885.5L1935.7 882.8L1932.4 877.6L1930.7 875.5L1925.1 878.6L1919.2 876.3L1917.9 869.7L1922.3 865.8L1929.9 861.9L1935.1 856.6L1939.0 851.4L1946.2 848.0L1955.6 846.1L1961.7 844.8L1970.6 846.7L1973.0 848.0L1977.6 849.3L1988.9 851.4L1996.1 854.0L1994.8 857.4L1983.6 856.6L1979.0 856.1L1983.3 860.6L1989.4 863.2L1995.7 861.3L1996.0 857.9L2003.5 857.1L2002.3 852.7L2009.6 855.3L2021.4 851.4L2029.9 850.9L2036.1 850.1L2044.4 849.3L2054.0 851.4L2048.8 844.8L2050.3 839.6L2059.8 843.5L2065.4 852.7L2068.8 855.3L2066.3 857.1L2067.0 851.4L2064.3 842.2L2072.4 841.7L2074.5 838.3L2086.1 837.0L2087.3 833.0L2104.0 831.2L2112.9 827.3L2119.4 830.4L2132.7 831.7L2140.8 837.0L2134.0 837.5L2152.0 839.1L2162.9 839.6L2172.5 840.9L2180.4 844.8L2185.6 843.5L2199.2 841.4L2198.3 839.6L2223.0 843.0L2229.8 845.3L2250.1 848.2L2254.7 848.5L2273.7 850.1L2272.8 847.4L2284.4 848.2L2295.3 850.1L2307.0 860.6L2303.9 861.9L2306.8 867.1L2299.1 871.0L2296.8 873.7L2285.3 873.7L2284.8 878.9L2286.4 884.2L2288.3 887.6L2287.0 892.0L2285.9 896.0L2282.4 897.3L2275.8 889.4L2269.3 881.5L2270.9 878.9L2272.7 872.4L2277.4 869.7L2270.2 869.2L2264.6 873.7L2257.4 876.3L2247.6 875.5L2236.1 875.5L2232.3 880.2L2230.1 888.1L2235.6 889.4L2241.8 892.0L2245.0 899.9L2247.1 905.1L2244.0 910.4L2240.2 915.6L2235.3 918.8L2231.4 918.2L2228.4 920.1L2228.5 923.5L2225.4 926.6L2231.6 934.0L2232.8 938.4L2228.9 940.0L2226.0 940.5L2225.0 935.3L2220.1 931.9L2219.1 927.4L2215.9 926.6L2210.3 928.7L2208.7 924.0L2203.9 928.2L2201.2 930.0L2205.5 933.2L2214.3 933.5L2210.3 936.6L2208.0 939.2L2214.1 945.8L2217.6 949.7L2216.3 955.0L2218.2 957.6L2215.2 964.1L2211.0 966.8L2206.6 970.7L2200.4 972.5L2193.0 975.1L2191.6 977.8L2187.7 974.1L2183.2 978.6L2181.7 981.7L2185.4 986.4L2190.6 990.4L2192.5 996.9L2192.1 1000.8L2187.0 1003.5L2182.0 1007.4L2181.9 1004.8L2177.8 1003.5L2174.9 999.5L2170.9 997.7L2169.4 995.6L2168.5 1000.8L2167.0 1006.1L2169.8 1010.0L2173.2 1014.0L2177.2 1017.9L2178.7 1024.4L2180.6 1027.3L2178.5 1027.3L2172.9 1023.7L2170.4 1017.9L2169.7 1014.0L2165.1 1010.0L2164.7 1003.5L2164.5 996.9L2161.7 991.7L2160.8 987.7L2155.8 989.6L2152.6 989.0L2152.6 983.8L2149.4 979.1L2145.0 974.6L2142.1 972.0L2137.1 973.8L2132.1 975.4L2131.2 978.6L2127.4 979.9L2121.7 987.7L2115.9 990.4L2116.3 996.1L2115.7 1004.0L2111.7 1007.7L2110.0 1009.8L2107.2 1007.4L2104.3 1000.8L2101.3 994.3L2098.3 989.0L2095.8 981.2L2095.1 975.9L2089.4 976.5L2085.2 972.5L2087.6 971.2L2083.6 969.4L2080.2 966.8L2077.9 964.4L2066.3 964.9L2054.7 964.1L2051.7 960.2L2045.4 961.0L2038.7 958.1L2034.3 952.3L2031.1 951.8L2029.3 953.6L2035.0 960.7L2035.8 964.1L2038.1 966.8L2039.1 962.8L2040.8 967.5L2045.9 967.5L2050.8 964.1L2051.4 962.3L2053.1 966.8L2057.7 968.9L2061.3 972.0L2058.4 977.2L2056.6 981.2L2051.1 985.1L2043.5 988.3L2034.6 993.5L2024.3 997.4L2020.4 997.7L2018.4 993.0L2017.4 987.7L2011.8 979.9L2008.1 974.6L2006.0 968.6L2001.8 964.1L1997.6 958.1L1995.5 953.6L1992.4 957.1L1989.8 952.6L1993.7 948.9L1995.4 944.5L1997.0 939.2L1997.1 934.5L1992.1 935.6L1988.4 936.3L1983.3 935.8L1979.5 934.8L1975.6 934.0L1972.9 930.0L1971.9 927.4L1973.7 924.8L1978.6 923.0L1984.7 922.7L1989.5 920.9L1993.7 920.9L1997.2 922.7L2002.2 923.5L2009.5 922.2L2009.1 918.8L2002.5 915.1L1998.6 913.5L1999.3 909.1L2002.0 907.2L1997.9 907.8L1992.5 909.6L1996.0 912.2L1993.6 913.0L1988.9 914.3L1986.8 910.9L1982.2 908.8L1979.5 911.7L1977.2 915.6L1975.3 919.6L1976.5 922.2L1978.6 923.5L1971.9 924.0L1966.2 924.0L1965.1 926.1L1963.3 925.1L1964.8 928.7L1966.7 931.4L1964.3 932.7L1963.9 935.3L1961.1 934.5L1959.6 930.8L1956.4 926.9L1954.7 922.2L1953.5 920.1L1946.0 916.9L1943.3 913.0L1940.1 911.4L1936.7 912.2L1937.0 915.1L1940.3 916.9L1946.2 921.4L1952.6 925.6L1948.8 924.8L1948.0 928.7L1949.3 928.7L1946.6 931.4L1945.7 926.6L1942.6 924.5L1937.0 921.7L1932.5 918.5L1931.6 915.9L1927.9 914.6L1925.0 916.1L1921.3 918.0L1916.4 916.9L1914.2 919.6L1914.4 921.4L1908.5 924.0L1906.0 927.4L1907.0 929.3L1904.7 932.1L1901.5 934.5L1895.2 934.8Z M2200.5 1088.7L2200.0 1099.2L2199.8 1112.3L2197.6 1120.9L2204.7 1122.8L2213.0 1120.2L2221.3 1117.5L2232.2 1114.9L2241.5 1113.6L2246.7 1117.5L2249.1 1122.3L2256.1 1117.5L2254.3 1124.1L2258.1 1125.4L2258.8 1130.6L2265.5 1132.7L2272.3 1133.3L2277.8 1130.1L2283.3 1128.8L2289.0 1120.2L2296.7 1112.3L2300.3 1104.4L2300.7 1097.9L2296.8 1092.6L2293.0 1086.1L2288.7 1081.6L2286.9 1076.9L2286.0 1070.3L2281.6 1068.2L2280.0 1059.3L2277.3 1065.1L2275.8 1073.0L2271.2 1077.4L2265.3 1073.0L2260.4 1070.3L2262.7 1062.5L2254.9 1061.2L2249.5 1063.3L2244.8 1070.3L2238.5 1067.7L2232.9 1071.6L2227.1 1075.6L2224.0 1079.5L2216.9 1083.4L2208.9 1085.3Z M1517.7 850.1L1523.4 852.7L1531.4 857.4L1522.2 862.1L1514.4 861.1L1513.2 857.9L1506.0 860.6Z M2266.6 1137.7L2274.6 1138.2L2273.2 1142.4L2267.9 1145.1L2266.1 1142.4Z M2343.4 1121.5L2346.0 1126.2L2348.3 1129.6L2354.0 1129.9L2348.7 1134.1L2346.7 1137.2L2341.4 1139.8L2342.4 1135.9L2340.7 1134.1L2344.6 1130.6L2345.3 1126.7Z M2336.4 1137.5L2338.7 1140.3L2332.7 1145.1L2326.9 1147.7L2323.5 1151.6L2317.7 1153.2L2313.7 1151.6L2319.8 1147.2L2328.0 1143.2L2334.1 1138.5Z M2251.1 1033.1L2259.0 1033.1L2261.5 1039.7L2268.2 1035.5L2277.3 1037.8L2287.7 1042.8L2294.1 1046.7L2291.3 1049.4L2295.0 1053.3L2301.1 1058.0L2293.3 1057.2L2285.9 1051.2L2281.7 1054.6L2276.5 1054.6L2271.4 1052.0L2269.2 1045.4L2262.7 1042.8L2256.2 1041.5L2255.0 1038.3Z M2193.2 1027.1L2198.5 1026.5L2203.7 1022.6L2210.1 1017.9L2213.8 1012.6L2219.3 1017.4L2216.8 1024.4L2219.0 1028.4L2215.6 1033.1L2212.8 1040.2L2207.5 1041.5L2199.7 1039.4L2195.8 1034.9Z M2156.9 1016.3L2162.8 1017.4L2170.8 1024.4L2178.8 1031.0L2181.4 1036.2L2185.2 1040.2L2184.5 1046.2L2181.1 1046.2L2174.7 1041.5L2170.9 1034.9L2165.6 1027.1L2160.3 1021.8Z M2183.1 1048.8L2191.5 1048.0L2198.1 1048.6L2207.1 1051.2L2206.5 1053.6L2195.3 1052.5L2186.2 1050.7Z M2220.8 1032.3L2223.5 1027.9L2230.0 1028.4L2235.3 1026.8L2234.0 1030.0L2226.1 1029.7L2224.8 1033.6L2230.0 1033.6L2228.7 1038.9L2229.8 1044.1L2226.7 1043.6L2224.7 1038.3L2222.9 1045.4L2220.6 1045.4L2220.0 1038.9Z M2220.1 982.5L2224.6 982.8L2224.9 989.0L2231.0 996.9L2228.2 995.6L2224.2 994.3L2221.4 993.0L2219.7 989.0Z M2226.9 1012.6L2230.6 1008.7L2235.7 1005.6L2238.7 1011.3L2236.3 1015.3L2232.3 1014.0Z M2226.1 1000.8L2231.3 1000.1L2235.4 1002.2L2234.3 1004.8L2229.2 1006.1L2227.1 1003.5Z M2238.1 941.8L2240.9 937.9L2249.6 937.4L2250.7 933.2L2255.1 931.4L2255.1 924.8L2258.0 922.7L2261.1 927.4L2260.1 931.4L2261.4 936.6L2260.3 939.2L2256.7 940.0L2253.0 940.3L2250.1 943.2L2248.0 940.3L2240.9 941.8Z M2236.2 943.2L2240.4 942.9L2241.0 948.7L2238.4 949.2L2235.8 944.5Z M2242.1 941.8L2247.0 941.3L2246.8 943.2L2244.3 945.0L2242.2 943.7Z M2253.5 920.9L2253.4 912.2L2254.4 911.7L2263.6 915.6L2265.6 917.5L2262.2 920.9L2255.4 919.6Z M2242.2 888.6L2246.6 892.0L2252.2 899.9L2255.7 907.8L2253.8 910.4L2251.3 905.1L2247.2 897.3Z M2218.4 964.9L2221.1 965.4L2219.5 973.3L2217.4 970.7Z M2189.1 980.4L2193.5 978.6L2195.0 979.9L2191.5 983.0L2189.4 982.2Z M2116.3 1005.6L2121.3 1011.3L2119.3 1015.3L2116.7 1014.7L2116.0 1010.0Z M2035.6 1062.5L2038.4 1071.6L2035.5 1075.6L2029.0 1096.0L2023.0 1097.9L2019.0 1091.3L2020.8 1083.4L2022.6 1074.3L2027.9 1071.6L2032.1 1066.4Z M1893.3 899.9L1899.3 898.3L1909.6 896.7L1910.5 892.8L1906.5 890.7L1903.0 886.8L1901.8 884.2L1902.3 880.0L1897.2 879.7L1899.6 877.3L1894.9 877.3L1892.5 881.5L1893.6 885.5L1895.2 887.3L1899.4 889.4L1898.9 891.2L1895.8 891.5L1896.5 893.9L1894.1 895.2L1899.3 896.2L1895.7 897.3Z M1892.2 894.1L1892.3 889.4L1891.9 886.3L1887.7 886.3L1882.8 888.9L1883.9 892.0L1881.9 894.6L1883.8 896.0L1888.6 894.6Z M1686.8 973.3L1694.4 970.2L1700.8 971.5L1706.9 974.6L1713.8 978.0L1705.2 978.8L1704.1 976.7L1698.0 973.3L1692.9 972.0Z M1712.9 982.8L1716.8 978.8L1724.6 979.1L1728.5 982.2L1721.6 983.8L1713.8 983.3Z M1937.8 931.4L1945.3 930.8L1944.7 934.8L1939.2 933.2Z M1927.1 923.5L1930.6 923.5L1930.5 928.2L1927.8 928.7Z M1927.8 919.6L1930.0 918.2L1929.8 922.2L1928.3 921.9Z M1965.8 937.9L1972.9 938.4L1972.2 939.2L1966.1 938.7Z M1988.1 939.2L1993.6 937.6L1992.4 939.5L1989.5 940.3Z M1599.0 898.1L1605.4 899.9L1607.1 904.1L1603.8 903.3L1599.4 899.9Z M1763.1 905.9L1772.4 896.0L1772.5 901.2L1778.1 903.8L1777.2 908.5L1771.2 908.0L1767.9 906.4Z M1501.4 978.0L1503.8 978.8L1503.5 980.7L1501.1 980.9Z M1760.3 1165.5L1767.5 1165.5L1766.9 1167.9L1762.1 1167.9Z M1743.4 1169.2L1752.6 1174.4L1746.6 1176.3L1738.8 1173.9L1740.2 1170.5Z M1931.9 884.7L1936.0 884.2L1935.5 887.3L1932.4 886.8Z M2296.8 1045.4L2303.5 1042.3L2306.9 1042.3L2306.0 1045.4L2299.3 1047.5Z M2230.3 1058.0L2239.8 1053.3L2234.5 1054.1L2231.8 1055.9Z M2211.0 1053.0L2218.9 1052.8L2229.4 1052.8L2228.0 1054.3L2216.1 1054.3Z M2241.9 1025.8L2244.5 1027.1L2244.5 1032.3L2242.4 1032.3Z M2243.1 1038.9L2250.5 1038.9L2249.6 1040.7L2243.1 1040.2Z M2332.4 1084.0L2339.0 1089.2L2337.6 1089.7L2332.1 1085.5Z M2072.9 1159.5L2076.9 1160.0L2075.3 1161.3L2073.0 1161.1Z M1740.9 837.7L1747.8 840.1L1757.2 846.1L1761.8 850.1L1770.2 856.1L1761.5 864.5L1752.4 867.9L1745.2 863.2L1732.4 861.9L1745.2 857.9L1745.4 852.7L1737.3 847.4L1724.4 847.4L1718.3 843.5L1724.0 838.3L1732.3 838.3Z M1659.2 843.5L1676.8 840.1L1687.6 839.6L1690.2 847.4L1677.2 850.6L1660.7 849.5L1654.8 846.1Z M1643.4 842.2L1657.5 836.2L1664.7 839.6L1654.9 843.5L1645.8 844.3Z M1725.8 830.4L1741.1 823.8L1736.5 818.6L1760.6 813.4L1788.0 813.4L1790.4 817.3L1771.3 822.5L1754.7 826.5L1745.5 830.9Z M1711.5 833.0L1729.8 830.4L1744.0 833.0L1738.3 835.4L1717.8 835.4Z M1670.2 831.7L1689.6 830.4L1692.1 834.3L1680.6 835.6L1669.6 834.3Z M1709.4 826.5L1728.1 821.2L1735.3 823.8L1720.0 827.8Z M1694.9 838.3L1705.9 837.5L1704.5 842.2L1695.1 843.5Z M1713.6 859.2L1720.9 857.9L1726.2 863.2L1717.1 865.8L1712.4 864.0Z M1927.7 822.0L1937.2 821.2L1952.3 820.4L1958.3 821.2L1947.6 825.2L1942.4 829.1L1936.4 829.1L1932.1 825.9Z M2015.4 843.5L2020.3 845.3L2028.1 843.5L2022.2 839.6L2025.6 835.6L2031.7 831.7L2043.6 829.6L2040.1 832.2L2029.0 834.3L2022.1 837.0L2019.6 840.9Z M2090.0 822.5L2095.4 818.6L2110.8 823.8L2102.9 825.7Z M2184.8 833.0L2195.3 831.7L2212.2 833.8L2203.6 835.1L2194.6 836.2Z M1996.0 819.9L2009.5 817.3L2023.6 818.6L2015.5 820.7Z M2284.3 843.5L2287.0 843.5L2289.1 845.1L2287.0 845.1Z M1856.9 856.9L1866.8 857.4L1874.5 857.4L1876.0 860.6L1870.7 863.2L1863.8 864.8L1856.1 863.4L1857.5 861.1L1853.3 859.2Z"/></clipPath>
<filter id="b12" x="-20%" y="-20%" width="140%" height="140%"><feGaussianBlur stdDeviation="9"/></filter>
<filter id="b20" x="-20%" y="-20%" width="140%" height="140%"><feGaussianBlur stdDeviation="18"/></filter>
<filter id="b5" x="-20%" y="-20%" width="140%" height="140%"><feGaussianBlur stdDeviation="4"/></filter>
<filter id="b1" x="-5%" y="-5%" width="110%" height="110%"><feGaussianBlur stdDeviation="0.7"/></filter>
</defs>
<g clip-path="url(#mapclip)">
<rect x="1428.0" y="790.0" width="957.0" height="482.0" fill="#7aafd5"/>
<g filter="url(#b20)">
<ellipse cx="1542.8" cy="978.6" rx="90.9" ry="57.7" fill="#6c9fc4" opacity="0.9"/>
<ellipse cx="1578.0" cy="1122.8" rx="101.1" ry="47.2" fill="#6c9fc4" opacity="0.9"/>
<ellipse cx="1486.9" cy="1057.2" rx="65.6" ry="52.4" fill="#6c9fc4" opacity="0.6"/>
<ellipse cx="1803.9" cy="957.6" rx="46.2" ry="36.7" fill="#6c9fc4" opacity="0.9"/>
<ellipse cx="1842.0" cy="1096.6" rx="36.1" ry="52.4" fill="#6c9fc4" opacity="0.8"/>
<ellipse cx="2099.9" cy="1096.6" rx="56.7" ry="52.4" fill="#6c9fc4" opacity="0.8"/>
<ellipse cx="2127.4" cy="1149.0" rx="98.2" ry="26.2" fill="#6c9fc4" opacity="0.6"/>
<ellipse cx="2319.1" cy="965.4" rx="56.7" ry="47.2" fill="#6c9fc4" opacity="0.9"/>
<ellipse cx="2353.7" cy="1109.7" rx="25.6" ry="47.2" fill="#6c9fc4" opacity="0.5"/>
<ellipse cx="1670.9" cy="1175.2" rx="141.4" ry="21.0" fill="#6c9fc4" opacity="0.5"/>
<ellipse cx="1954.7" cy="1162.1" rx="120.4" ry="21.0" fill="#6c9fc4" opacity="0.5"/>
<ellipse cx="1781.8" cy="926.1" rx="24.9" ry="21.0" fill="#6c9fc4" opacity="0.5"/>
</g>
<g filter="url(#b12)">
<ellipse cx="1906.5" cy="821.2" rx="326.0" ry="15.7" fill="#88bbde" opacity="0.7"/>
<ellipse cx="2108.5" cy="831.7" rx="161.6" ry="10.5" fill="#88bbde" opacity="0.8"/>
<ellipse cx="1711.4" cy="873.7" rx="18.4" ry="13.1" fill="#88bbde" opacity="0.9"/>
<ellipse cx="2222.1" cy="1036.2" rx="57.9" ry="21.0" fill="#88bbde" opacity="0.7"/>
<ellipse cx="1711.2" cy="983.8" rx="36.5" ry="15.7" fill="#88bbde" opacity="0.6"/>
<ellipse cx="1913.5" cy="884.2" rx="14.1" ry="10.5" fill="#88bbde" opacity="0.8"/>
<ellipse cx="1754.9" cy="1151.6" rx="14.7" ry="21.0" fill="#88bbde" opacity="0.8"/>
<ellipse cx="1504.8" cy="873.7" rx="27.5" ry="13.1" fill="#88bbde" opacity="0.8"/>
<ellipse cx="2223.9" cy="944.5" rx="15.2" ry="18.4" fill="#88bbde" opacity="0.8"/>
<ellipse cx="2260.0" cy="1062.5" rx="26.2" ry="10.5" fill="#88bbde" opacity="0.8"/>
<ellipse cx="1948.6" cy="842.2" rx="52.6" ry="7.9" fill="#88bbde" opacity="0.6"/>
<ellipse cx="1772.5" cy="907.8" rx="14.6" ry="10.5" fill="#88bbde" opacity="0.6"/>
<ellipse cx="2323.7" cy="1149.0" rx="19.6" ry="15.7" fill="#88bbde" opacity="0.4"/>
<ellipse cx="2051.0" cy="1162.1" rx="24.1" ry="10.5" fill="#88bbde" opacity="0.4"/>
</g>
<g filter="url(#b1)">
<path d="M1534.0 859.2L1546.0 851.9L1560.1 846.9L1575.0 844.0L1586.6 846.1L1603.7 848.2L1614.9 850.1L1632.8 846.9L1648.4 848.8L1656.2 852.7L1671.4 852.7L1688.8 852.7L1700.5 851.4L1709.0 844.8L1712.1 850.1L1721.5 852.7L1730.5 850.1L1726.0 856.6L1713.6 859.2L1709.4 863.2L1695.5 868.4L1688.3 876.3L1690.7 881.5L1700.1 884.2L1712.1 886.8L1711.5 892.0L1714.8 896.5L1717.8 894.6L1719.9 888.1L1725.9 884.2L1725.9 877.6L1731.2 867.1L1740.9 868.4L1746.7 871.0L1747.2 876.3L1757.3 873.7L1758.0 878.9L1763.5 884.2L1770.4 889.4L1773.4 894.6L1762.0 899.9L1747.6 899.4L1739.3 903.8L1749.3 902.5L1749.3 907.8L1757.3 910.4L1749.2 914.3L1743.7 916.9L1742.1 913.0L1733.8 916.9L1731.7 921.4L1722.3 924.8L1717.4 930.0L1715.4 934.0L1715.8 938.7L1708.9 941.8L1700.4 947.1L1698.8 952.3L1700.9 960.2L1699.5 964.9L1695.9 962.8L1694.1 957.6L1691.9 952.3L1686.9 951.5L1679.2 951.8L1676.1 955.0L1667.4 953.1L1657.7 957.6L1655.1 965.4L1653.3 972.0L1656.8 981.2L1660.5 983.3L1668.4 982.5L1671.7 975.9L1681.0 974.6L1678.9 981.2L1676.7 985.1L1674.7 989.6L1683.4 989.0L1689.2 991.7L1687.4 1002.2L1690.0 1006.9L1696.6 1006.9L1699.3 1006.1L1703.6 1008.7L1701.6 1012.1L1696.4 1011.9L1693.8 1010.0L1688.6 1009.2L1683.6 1004.8L1681.2 1000.8L1677.5 996.9L1671.1 994.8L1664.8 992.2L1658.6 989.0L1653.3 989.6L1645.8 986.4L1636.0 981.2L1632.6 977.2L1633.4 972.0L1628.0 965.4L1623.8 960.2L1618.7 953.6L1617.3 948.9L1614.3 948.4L1613.9 952.3L1617.6 958.9L1620.5 964.1L1623.3 970.2L1620.8 969.9L1617.7 965.4L1613.8 958.9L1611.2 953.1L1609.1 945.8L1606.3 941.8L1601.6 940.5L1599.6 934.5L1597.4 927.4L1598.7 920.9L1603.2 910.4L1604.1 904.3L1609.0 902.5L1601.8 897.3L1599.4 888.1L1596.2 881.5L1590.5 877.6L1584.7 874.2L1572.9 871.6L1562.2 873.7L1554.7 877.6L1545.8 880.2L1536.9 882.8L1523.6 886.8L1533.6 881.0L1540.8 877.6L1532.5 876.3L1529.9 871.0L1532.2 865.8L1545.9 863.2L1538.1 861.9Z M1703.6 1008.7L1708.6 1002.7L1717.9 999.5L1719.1 1002.2L1723.2 999.0L1728.3 1002.7L1738.7 1003.5L1744.5 1002.9L1749.0 1008.7L1756.7 1015.3L1769.8 1018.4L1775.0 1028.4L1778.9 1033.6L1789.5 1037.6L1801.3 1038.3L1809.2 1044.1L1814.5 1046.7L1815.1 1052.0L1809.6 1061.2L1804.5 1067.7L1804.9 1076.9L1801.4 1086.1L1797.9 1091.3L1790.2 1093.4L1781.6 1099.2L1781.4 1105.7L1776.4 1112.3L1771.0 1120.2L1765.0 1122.8L1758.4 1120.7L1762.9 1126.2L1761.6 1131.2L1751.5 1133.3L1751.6 1138.5L1744.9 1138.5L1748.8 1143.2L1745.7 1149.0L1741.4 1151.6L1746.4 1155.6L1740.6 1163.4L1743.6 1168.1L1752.0 1174.7L1746.7 1176.5L1738.4 1172.6L1729.7 1167.4L1723.2 1156.9L1724.9 1149.0L1724.3 1141.1L1721.4 1130.6L1723.3 1122.8L1724.2 1112.3L1723.6 1104.4L1724.6 1091.3L1723.8 1079.5L1718.8 1075.6L1707.8 1067.7L1703.5 1061.2L1697.7 1050.7L1693.1 1046.7L1693.5 1042.3L1696.1 1038.9L1694.0 1036.8L1696.1 1029.7L1699.2 1027.1L1702.7 1020.5L1703.5 1012.6Z M1891.9 937.1L1901.4 938.7L1914.0 934.5L1931.6 933.5L1934.3 939.2L1932.6 941.8L1935.7 943.9L1944.6 946.3L1956.3 951.5L1957.3 945.8L1964.9 945.3L1970.2 947.9L1980.5 949.7L1988.8 949.2L1989.5 952.3L1993.9 960.2L1998.2 968.1L2003.0 975.9L2004.1 982.5L2009.6 990.4L2019.0 997.7L2019.9 1000.8L2024.5 1003.5L2032.3 1001.6L2040.6 1000.1L2040.2 1003.7L2035.2 1012.6L2031.4 1020.5L2022.2 1028.4L2015.7 1036.2L2010.3 1043.3L2008.9 1049.4L2010.8 1058.5L2012.8 1070.3L2005.5 1076.4L1997.4 1083.4L1998.2 1093.9L1991.5 1098.7L1990.6 1105.7L1984.3 1112.3L1974.9 1119.6L1962.2 1120.9L1957.1 1122.3L1952.9 1120.2L1952.3 1114.9L1948.8 1106.3L1945.1 1099.2L1944.0 1090.0L1937.7 1078.2L1937.3 1071.6L1941.8 1063.8L1940.6 1054.6L1938.6 1046.7L1935.4 1041.0L1930.2 1033.6L1931.5 1028.4L1932.0 1021.8L1929.6 1019.2L1922.3 1019.7L1918.3 1014.7L1910.4 1014.7L1901.2 1018.4L1894.7 1017.4L1886.8 1019.5L1882.3 1017.4L1876.3 1012.9L1871.9 1007.9L1867.2 1002.2L1862.5 998.2L1860.8 992.5L1863.5 987.7L1864.4 979.9L1862.4 975.9L1865.1 969.4L1869.2 962.8L1873.1 958.1L1878.3 955.7L1881.5 952.3L1882.3 947.1L1888.8 942.4Z M1892.6 936.6L1884.4 934.0L1883.2 929.5L1884.7 921.4L1883.8 917.7L1886.8 916.4L1896.6 917.2L1902.1 917.2L1903.6 910.4L1900.4 907.0L1895.1 904.3L1902.4 903.3L1902.9 900.7L1907.0 901.2L1910.6 897.5L1914.9 896.2L1917.7 892.0L1923.1 890.7L1927.1 889.4L1926.0 885.5L1925.6 881.5L1930.9 879.7L1930.4 884.2L1932.0 888.6L1934.9 888.9L1940.4 889.4L1950.2 887.6L1955.9 886.3L1956.0 881.5L1961.3 881.5L1962.6 878.1L1960.7 875.8L1969.8 875.0L1975.4 873.7L1971.7 872.1L1963.8 873.1L1958.2 873.7L1955.6 871.0L1954.5 865.8L1962.1 860.6L1959.6 858.5L1955.3 859.2L1954.5 861.9L1946.1 867.1L1945.8 871.0L1949.7 873.7L1944.9 880.2L1944.0 883.6L1940.1 885.5L1936.6 885.5L1935.7 882.8L1932.4 877.6L1930.7 875.5L1925.1 878.6L1919.2 876.3L1917.9 869.7L1922.3 865.8L1929.9 861.9L1935.1 856.6L1939.0 851.4L1946.2 848.0L1955.6 846.1L1961.7 844.8L1970.6 846.7L1973.0 848.0L1977.6 849.3L1988.9 851.4L1996.1 854.0L1994.8 857.4L1983.6 856.6L1979.0 856.1L1983.3 860.6L1989.4 863.2L1995.7 861.3L1996.0 857.9L2003.5 857.1L2002.3 852.7L2009.6 855.3L2021.4 851.4L2029.9 850.9L2036.1 850.1L2044.4 849.3L2054.0 851.4L2048.8 844.8L2050.3 839.6L2059.8 843.5L2065.4 852.7L2068.8 855.3L2066.3 857.1L2067.0 851.4L2064.3 842.2L2072.4 841.7L2074.5 838.3L2086.1 837.0L2087.3 833.0L2104.0 831.2L2112.9 827.3L2119.4 830.4L2132.7 831.7L2140.8 837.0L2134.0 837.5L2152.0 839.1L2162.9 839.6L2172.5 840.9L2180.4 844.8L2185.6 843.5L2199.2 841.4L2198.3 839.6L2223.0 843.0L2229.8 845.3L2250.1 848.2L2254.7 848.5L2273.7 850.1L2272.8 847.4L2284.4 848.2L2295.3 850.1L2307.0 860.6L2303.9 861.9L2306.8 867.1L2299.1 871.0L2296.8 873.7L2285.3 873.7L2284.8 878.9L2286.4 884.2L2288.3 887.6L2287.0 892.0L2285.9 896.0L2282.4 897.3L2275.8 889.4L2269.3 881.5L2270.9 878.9L2272.7 872.4L2277.4 869.7L2270.2 869.2L2264.6 873.7L2257.4 876.3L2247.6 875.5L2236.1 875.5L2232.3 880.2L2230.1 888.1L2235.6 889.4L2241.8 892.0L2245.0 899.9L2247.1 905.1L2244.0 910.4L2240.2 915.6L2235.3 918.8L2231.4 918.2L2228.4 920.1L2228.5 923.5L2225.4 926.6L2231.6 934.0L2232.8 938.4L2228.9 940.0L2226.0 940.5L2225.0 935.3L2220.1 931.9L2219.1 927.4L2215.9 926.6L2210.3 928.7L2208.7 924.0L2203.9 928.2L2201.2 930.0L2205.5 933.2L2214.3 933.5L2210.3 936.6L2208.0 939.2L2214.1 945.8L2217.6 949.7L2216.3 955.0L2218.2 957.6L2215.2 964.1L2211.0 966.8L2206.6 970.7L2200.4 972.5L2193.0 975.1L2191.6 977.8L2187.7 974.1L2183.2 978.6L2181.7 981.7L2185.4 986.4L2190.6 990.4L2192.5 996.9L2192.1 1000.8L2187.0 1003.5L2182.0 1007.4L2181.9 1004.8L2177.8 1003.5L2174.9 999.5L2170.9 997.7L2169.4 995.6L2168.5 1000.8L2167.0 1006.1L2169.8 1010.0L2173.2 1014.0L2177.2 1017.9L2178.7 1024.4L2180.6 1027.3L2178.5 1027.3L2172.9 1023.7L2170.4 1017.9L2169.7 1014.0L2165.1 1010.0L2164.7 1003.5L2164.5 996.9L2161.7 991.7L2160.8 987.7L2155.8 989.6L2152.6 989.0L2152.6 983.8L2149.4 979.1L2145.0 974.6L2142.1 972.0L2137.1 973.8L2132.1 975.4L2131.2 978.6L2127.4 979.9L2121.7 987.7L2115.9 990.4L2116.3 996.1L2115.7 1004.0L2111.7 1007.7L2110.0 1009.8L2107.2 1007.4L2104.3 1000.8L2101.3 994.3L2098.3 989.0L2095.8 981.2L2095.1 975.9L2089.4 976.5L2085.2 972.5L2087.6 971.2L2083.6 969.4L2080.2 966.8L2077.9 964.4L2066.3 964.9L2054.7 964.1L2051.7 960.2L2045.4 961.0L2038.7 958.1L2034.3 952.3L2031.1 951.8L2029.3 953.6L2035.0 960.7L2035.8 964.1L2038.1 966.8L2039.1 962.8L2040.8 967.5L2045.9 967.5L2050.8 964.1L2051.4 962.3L2053.1 966.8L2057.7 968.9L2061.3 972.0L2058.4 977.2L2056.6 981.2L2051.1 985.1L2043.5 988.3L2034.6 993.5L2024.3 997.4L2020.4 997.7L2018.4 993.0L2017.4 987.7L2011.8 979.9L2008.1 974.6L2006.0 968.6L2001.8 964.1L1997.6 958.1L1995.5 953.6L1992.4 957.1L1989.8 952.6L1993.7 948.9L1995.4 944.5L1997.0 939.2L1997.1 934.5L1992.1 935.6L1988.4 936.3L1983.3 935.8L1979.5 934.8L1975.6 934.0L1972.9 930.0L1971.9 927.4L1973.7 924.8L1978.6 923.0L1984.7 922.7L1989.5 920.9L1993.7 920.9L1997.2 922.7L2002.2 923.5L2009.5 922.2L2009.1 918.8L2002.5 915.1L1998.6 913.5L1999.3 909.1L2002.0 907.2L1997.9 907.8L1992.5 909.6L1996.0 912.2L1993.6 913.0L1988.9 914.3L1986.8 910.9L1982.2 908.8L1979.5 911.7L1977.2 915.6L1975.3 919.6L1976.5 922.2L1978.6 923.5L1971.9 924.0L1966.2 924.0L1965.1 926.1L1963.3 925.1L1964.8 928.7L1966.7 931.4L1964.3 932.7L1963.9 935.3L1961.1 934.5L1959.6 930.8L1956.4 926.9L1954.7 922.2L1953.5 920.1L1946.0 916.9L1943.3 913.0L1940.1 911.4L1936.7 912.2L1937.0 915.1L1940.3 916.9L1946.2 921.4L1952.6 925.6L1948.8 924.8L1948.0 928.7L1949.3 928.7L1946.6 931.4L1945.7 926.6L1942.6 924.5L1937.0 921.7L1932.5 918.5L1931.6 915.9L1927.9 914.6L1925.0 916.1L1921.3 918.0L1916.4 916.9L1914.2 919.6L1914.4 921.4L1908.5 924.0L1906.0 927.4L1907.0 929.3L1904.7 932.1L1901.5 934.5L1895.2 934.8Z M2200.5 1088.7L2200.0 1099.2L2199.8 1112.3L2197.6 1120.9L2204.7 1122.8L2213.0 1120.2L2221.3 1117.5L2232.2 1114.9L2241.5 1113.6L2246.7 1117.5L2249.1 1122.3L2256.1 1117.5L2254.3 1124.1L2258.1 1125.4L2258.8 1130.6L2265.5 1132.7L2272.3 1133.3L2277.8 1130.1L2283.3 1128.8L2289.0 1120.2L2296.7 1112.3L2300.3 1104.4L2300.7 1097.9L2296.8 1092.6L2293.0 1086.1L2288.7 1081.6L2286.9 1076.9L2286.0 1070.3L2281.6 1068.2L2280.0 1059.3L2277.3 1065.1L2275.8 1073.0L2271.2 1077.4L2265.3 1073.0L2260.4 1070.3L2262.7 1062.5L2254.9 1061.2L2249.5 1063.3L2244.8 1070.3L2238.5 1067.7L2232.9 1071.6L2227.1 1075.6L2224.0 1079.5L2216.9 1083.4L2208.9 1085.3Z M1517.7 850.1L1523.4 852.7L1531.4 857.4L1522.2 862.1L1514.4 861.1L1513.2 857.9L1506.0 860.6Z M2266.6 1137.7L2274.6 1138.2L2273.2 1142.4L2267.9 1145.1L2266.1 1142.4Z M2343.4 1121.5L2346.0 1126.2L2348.3 1129.6L2354.0 1129.9L2348.7 1134.1L2346.7 1137.2L2341.4 1139.8L2342.4 1135.9L2340.7 1134.1L2344.6 1130.6L2345.3 1126.7Z M2336.4 1137.5L2338.7 1140.3L2332.7 1145.1L2326.9 1147.7L2323.5 1151.6L2317.7 1153.2L2313.7 1151.6L2319.8 1147.2L2328.0 1143.2L2334.1 1138.5Z M2251.1 1033.1L2259.0 1033.1L2261.5 1039.7L2268.2 1035.5L2277.3 1037.8L2287.7 1042.8L2294.1 1046.7L2291.3 1049.4L2295.0 1053.3L2301.1 1058.0L2293.3 1057.2L2285.9 1051.2L2281.7 1054.6L2276.5 1054.6L2271.4 1052.0L2269.2 1045.4L2262.7 1042.8L2256.2 1041.5L2255.0 1038.3Z M2193.2 1027.1L2198.5 1026.5L2203.7 1022.6L2210.1 1017.9L2213.8 1012.6L2219.3 1017.4L2216.8 1024.4L2219.0 1028.4L2215.6 1033.1L2212.8 1040.2L2207.5 1041.5L2199.7 1039.4L2195.8 1034.9Z M2156.9 1016.3L2162.8 1017.4L2170.8 1024.4L2178.8 1031.0L2181.4 1036.2L2185.2 1040.2L2184.5 1046.2L2181.1 1046.2L2174.7 1041.5L2170.9 1034.9L2165.6 1027.1L2160.3 1021.8Z M2183.1 1048.8L2191.5 1048.0L2198.1 1048.6L2207.1 1051.2L2206.5 1053.6L2195.3 1052.5L2186.2 1050.7Z M2220.8 1032.3L2223.5 1027.9L2230.0 1028.4L2235.3 1026.8L2234.0 1030.0L2226.1 1029.7L2224.8 1033.6L2230.0 1033.6L2228.7 1038.9L2229.8 1044.1L2226.7 1043.6L2224.7 1038.3L2222.9 1045.4L2220.6 1045.4L2220.0 1038.9Z M2220.1 982.5L2224.6 982.8L2224.9 989.0L2231.0 996.9L2228.2 995.6L2224.2 994.3L2221.4 993.0L2219.7 989.0Z M2226.9 1012.6L2230.6 1008.7L2235.7 1005.6L2238.7 1011.3L2236.3 1015.3L2232.3 1014.0Z M2226.1 1000.8L2231.3 1000.1L2235.4 1002.2L2234.3 1004.8L2229.2 1006.1L2227.1 1003.5Z M2238.1 941.8L2240.9 937.9L2249.6 937.4L2250.7 933.2L2255.1 931.4L2255.1 924.8L2258.0 922.7L2261.1 927.4L2260.1 931.4L2261.4 936.6L2260.3 939.2L2256.7 940.0L2253.0 940.3L2250.1 943.2L2248.0 940.3L2240.9 941.8Z M2236.2 943.2L2240.4 942.9L2241.0 948.7L2238.4 949.2L2235.8 944.5Z M2242.1 941.8L2247.0 941.3L2246.8 943.2L2244.3 945.0L2242.2 943.7Z M2253.5 920.9L2253.4 912.2L2254.4 911.7L2263.6 915.6L2265.6 917.5L2262.2 920.9L2255.4 919.6Z M2242.2 888.6L2246.6 892.0L2252.2 899.9L2255.7 907.8L2253.8 910.4L2251.3 905.1L2247.2 897.3Z M2218.4 964.9L2221.1 965.4L2219.5 973.3L2217.4 970.7Z M2189.1 980.4L2193.5 978.6L2195.0 979.9L2191.5 983.0L2189.4 982.2Z M2116.3 1005.6L2121.3 1011.3L2119.3 1015.3L2116.7 1014.7L2116.0 1010.0Z M2035.6 1062.5L2038.4 1071.6L2035.5 1075.6L2029.0 1096.0L2023.0 1097.9L2019.0 1091.3L2020.8 1083.4L2022.6 1074.3L2027.9 1071.6L2032.1 1066.4Z M1893.3 899.9L1899.3 898.3L1909.6 896.7L1910.5 892.8L1906.5 890.7L1903.0 886.8L1901.8 884.2L1902.3 880.0L1897.2 879.7L1899.6 877.3L1894.9 877.3L1892.5 881.5L1893.6 885.5L1895.2 887.3L1899.4 889.4L1898.9 891.2L1895.8 891.5L1896.5 893.9L1894.1 895.2L1899.3 896.2L1895.7 897.3Z M1892.2 894.1L1892.3 889.4L1891.9 886.3L1887.7 886.3L1882.8 888.9L1883.9 892.0L1881.9 894.6L1883.8 896.0L1888.6 894.6Z M1686.8 973.3L1694.4 970.2L1700.8 971.5L1706.9 974.6L1713.8 978.0L1705.2 978.8L1704.1 976.7L1698.0 973.3L1692.9 972.0Z M1712.9 982.8L1716.8 978.8L1724.6 979.1L1728.5 982.2L1721.6 983.8L1713.8 983.3Z M1937.8 931.4L1945.3 930.8L1944.7 934.8L1939.2 933.2Z M1927.1 923.5L1930.6 923.5L1930.5 928.2L1927.8 928.7Z M1927.8 919.6L1930.0 918.2L1929.8 922.2L1928.3 921.9Z M1965.8 937.9L1972.9 938.4L1972.2 939.2L1966.1 938.7Z M1988.1 939.2L1993.6 937.6L1992.4 939.5L1989.5 940.3Z M1599.0 898.1L1605.4 899.9L1607.1 904.1L1603.8 903.3L1599.4 899.9Z M1763.1 905.9L1772.4 896.0L1772.5 901.2L1778.1 903.8L1777.2 908.5L1771.2 908.0L1767.9 906.4Z M1501.4 978.0L1503.8 978.8L1503.5 980.7L1501.1 980.9Z M1760.3 1165.5L1767.5 1165.5L1766.9 1167.9L1762.1 1167.9Z M1743.4 1169.2L1752.6 1174.4L1746.6 1176.3L1738.8 1173.9L1740.2 1170.5Z M1931.9 884.7L1936.0 884.2L1935.5 887.3L1932.4 886.8Z M2296.8 1045.4L2303.5 1042.3L2306.9 1042.3L2306.0 1045.4L2299.3 1047.5Z M2230.3 1058.0L2239.8 1053.3L2234.5 1054.1L2231.8 1055.9Z M2211.0 1053.0L2218.9 1052.8L2229.4 1052.8L2228.0 1054.3L2216.1 1054.3Z M2241.9 1025.8L2244.5 1027.1L2244.5 1032.3L2242.4 1032.3Z M2243.1 1038.9L2250.5 1038.9L2249.6 1040.7L2243.1 1040.2Z M2332.4 1084.0L2339.0 1089.2L2337.6 1089.7L2332.1 1085.5Z M2072.9 1159.5L2076.9 1160.0L2075.3 1161.3L2073.0 1161.1Z" fill="#e3e7b9"/>
<path d="M1740.9 837.7L1747.8 840.1L1757.2 846.1L1761.8 850.1L1770.2 856.1L1761.5 864.5L1752.4 867.9L1745.2 863.2L1732.4 861.9L1745.2 857.9L1745.4 852.7L1737.3 847.4L1724.4 847.4L1718.3 843.5L1724.0 838.3L1732.3 838.3Z M1659.2 843.5L1676.8 840.1L1687.6 839.6L1690.2 847.4L1677.2 850.6L1660.7 849.5L1654.8 846.1Z M1643.4 842.2L1657.5 836.2L1664.7 839.6L1654.9 843.5L1645.8 844.3Z M1725.8 830.4L1741.1 823.8L1736.5 818.6L1760.6 813.4L1788.0 813.4L1790.4 817.3L1771.3 822.5L1754.7 826.5L1745.5 830.9Z M1711.5 833.0L1729.8 830.4L1744.0 833.0L1738.3 835.4L1717.8 835.4Z M1670.2 831.7L1689.6 830.4L1692.1 834.3L1680.6 835.6L1669.6 834.3Z M1709.4 826.5L1728.1 821.2L1735.3 823.8L1720.0 827.8Z M1694.9 838.3L1705.9 837.5L1704.5 842.2L1695.1 843.5Z M1713.6 859.2L1720.9 857.9L1726.2 863.2L1717.1 865.8L1712.4 864.0Z M1927.7 822.0L1937.2 821.2L1952.3 820.4L1958.3 821.2L1947.6 825.2L1942.4 829.1L1936.4 829.1L1932.1 825.9Z M2015.4 843.5L2020.3 845.3L2028.1 843.5L2022.2 839.6L2025.6 835.6L2031.7 831.7L2043.6 829.6L2040.1 832.2L2029.0 834.3L2022.1 837.0L2019.6 840.9Z M2090.0 822.5L2095.4 818.6L2110.8 823.8L2102.9 825.7Z M2184.8 833.0L2195.3 831.7L2212.2 833.8L2203.6 835.1L2194.6 836.2Z M1996.0 819.9L2009.5 817.3L2023.6 818.6L2015.5 820.7Z M2284.3 843.5L2287.0 843.5L2289.1 845.1L2287.0 845.1Z M1856.9 856.9L1866.8 857.4L1874.5 857.4L1876.0 860.6L1870.7 863.2L1863.8 864.8L1856.1 863.4L1857.5 861.1L1853.3 859.2Z" fill="#e1e2dc"/>
</g>
<g clip-path="url(#landclip)"><g filter="url(#b12)">
<ellipse cx="1690.5" cy="850.1" rx="118.8" ry="14.4" fill="#e0e1d9" opacity="1"/>
<ellipse cx="1566.5" cy="855.3" rx="35.1" ry="13.1" fill="#e0e1d9" opacity="1"/>
<ellipse cx="1564.1" cy="871.0" rx="22.8" ry="7.9" fill="#e0e1d9" opacity="0.7"/>
<ellipse cx="1739.4" cy="878.9" rx="23.2" ry="13.1" fill="#e0e1d9" opacity="0.9"/>
<ellipse cx="1647.2" cy="865.8" rx="63.1" ry="10.5" fill="#e0e1d9" opacity="0.7"/>
<ellipse cx="1692.3" cy="865.8" rx="27.1" ry="10.5" fill="#e0e1d9" opacity="0.7"/>
<ellipse cx="1659.1" cy="886.8" rx="70.7" ry="13.1" fill="#b7d0ad" opacity="1"/>
<ellipse cx="1612.9" cy="889.4" rx="16.6" ry="21.0" fill="#b7d0ad" opacity="0.9"/>
<ellipse cx="1724.4" cy="905.1" rx="24.3" ry="11.8" fill="#b7d0ad" opacity="1"/>
<ellipse cx="1697.3" cy="936.6" rx="17.6" ry="15.7" fill="#b7d0ad" opacity="0.8"/>
<ellipse cx="1686.4" cy="910.4" rx="19.6" ry="7.9" fill="#b7d0ad" opacity="0.7"/>
<ellipse cx="1623.9" cy="928.7" rx="16.3" ry="21.0" fill="#efdcc9" opacity="0.9"/>
<ellipse cx="1636.7" cy="960.2" rx="12.8" ry="13.1" fill="#efdcc9" opacity="0.6"/>
<ellipse cx="1612.0" cy="913.0" rx="9.8" ry="15.7" fill="#d3d4d0" opacity="0.5"/>
<ellipse cx="1746.1" cy="1041.5" rx="39.4" ry="26.2" fill="#a9c9ae" opacity="1"/>
<ellipse cx="1761.9" cy="1023.1" rx="18.4" ry="9.2" fill="#a9c9ae" opacity="0.9"/>
<ellipse cx="1711.9" cy="1023.1" rx="10.5" ry="15.7" fill="#a9c9ae" opacity="0.8"/>
<ellipse cx="1676.6" cy="991.7" rx="10.4" ry="7.9" fill="#a9c9ae" opacity="0.7"/>
<ellipse cx="1775.6" cy="1062.5" rx="15.7" ry="13.1" fill="#b7d0ad" opacity="0.6"/>
<ellipse cx="1727.0" cy="1093.9" rx="5.7" ry="44.6" fill="#d3d4d0" opacity="0.9"/>
<ellipse cx="1707.0" cy="1052.0" rx="6.6" ry="21.0" fill="#d3d4d0" opacity="0.7"/>
<ellipse cx="1739.6" cy="1149.0" rx="9.8" ry="21.0" fill="#efdcc9" opacity="0.8"/>
<ellipse cx="1919.4" cy="968.1" rx="69.7" ry="22.3" fill="#f2e4d3" opacity="1"/>
<ellipse cx="1978.9" cy="970.7" rx="20.7" ry="21.0" fill="#f2e4d3" opacity="1"/>
<ellipse cx="2028.1" cy="970.7" rx="23.3" ry="23.6" fill="#f2e4d3" opacity="1"/>
<ellipse cx="2024.7" cy="1015.3" rx="13.1" ry="15.7" fill="#f2e4d3" opacity="0.7"/>
<ellipse cx="2003.6" cy="952.3" rx="15.3" ry="10.5" fill="#f2e4d3" opacity="0.8"/>
<ellipse cx="1959.1" cy="1031.0" rx="26.3" ry="14.4" fill="#a9c9ae" opacity="1"/>
<ellipse cx="1885.5" cy="1012.6" rx="15.8" ry="6.6" fill="#a9c9ae" opacity="0.6"/>
<ellipse cx="1998.4" cy="1052.0" rx="13.1" ry="15.7" fill="#b7d0ad" opacity="0.5"/>
<ellipse cx="1953.0" cy="1093.9" rx="15.5" ry="13.1" fill="#f2e4d3" opacity="0.7"/>
<ellipse cx="1945.5" cy="1083.4" rx="7.8" ry="21.0" fill="#efdcc9" opacity="0.7"/>
<ellipse cx="2051.5" cy="947.1" rx="22.9" ry="15.7" fill="#efdcc9" opacity="0.95"/>
<ellipse cx="2065.1" cy="920.9" rx="32.2" ry="11.8" fill="#f2e4d3" opacity="0.85"/>
<ellipse cx="2028.8" cy="910.4" rx="19.6" ry="7.9" fill="#f2e4d3" opacity="0.4"/>
<ellipse cx="2129.9" cy="944.5" rx="33.0" ry="11.0" fill="#d4d7d8" opacity="1"/>
<ellipse cx="2122.6" cy="945.8" rx="20.3" ry="6.6" fill="#cfd2d4" opacity="0.9"/>
<ellipse cx="2135.2" cy="923.5" rx="39.8" ry="9.2" fill="#efdcc9" opacity="0.95"/>
<ellipse cx="2165.9" cy="918.2" rx="22.2" ry="7.9" fill="#efdcc9" opacity="0.8"/>
<ellipse cx="2087.5" cy="934.0" rx="12.6" ry="7.9" fill="#d3d4d0" opacity="0.9"/>
<ellipse cx="2116.9" cy="842.2" rx="157.8" ry="9.2" fill="#e0e1d9" opacity="1"/>
<ellipse cx="2235.5" cy="855.3" rx="54.8" ry="13.1" fill="#e0e1d9" opacity="0.95"/>
<ellipse cx="2287.3" cy="863.2" rx="22.4" ry="13.1" fill="#e0e1d9" opacity="1"/>
<ellipse cx="2188.3" cy="865.8" rx="45.1" ry="7.9" fill="#e0e1d9" opacity="0.5"/>
<ellipse cx="2090.2" cy="873.7" rx="114.8" ry="14.4" fill="#b7d0ad" opacity="1"/>
<ellipse cx="2201.0" cy="886.8" rx="42.4" ry="15.7" fill="#b7d0ad" opacity="0.9"/>
<ellipse cx="1974.6" cy="868.4" rx="27.2" ry="15.7" fill="#b7d0ad" opacity="0.9"/>
<ellipse cx="1937.9" cy="863.2" rx="11.2" ry="15.7" fill="#e0e1d9" opacity="0.7"/>
<ellipse cx="2012.0" cy="884.2" rx="46.9" ry="10.5" fill="#b7d0ad" opacity="0.7"/>
<ellipse cx="1930.7" cy="902.5" rx="29.0" ry="10.5" fill="#b7d0ad" opacity="0.35"/>
<ellipse cx="2171.5" cy="978.6" rx="15.6" ry="18.4" fill="#a9c9ae" opacity="0.7"/>
<ellipse cx="2183.6" cy="957.6" rx="15.4" ry="10.5" fill="#b7d0ad" opacity="0.6"/>
<ellipse cx="2220.7" cy="913.0" rx="12.3" ry="13.1" fill="#b7d0ad" opacity="0.7"/>
<ellipse cx="2203.8" cy="1031.0" rx="21.0" ry="13.1" fill="#a9c9ae" opacity="0.7"/>
<ellipse cx="2274.5" cy="1044.1" rx="21.0" ry="7.9" fill="#a9c9ae" opacity="0.7"/>
<ellipse cx="2174.8" cy="1031.0" rx="10.5" ry="13.1" fill="#a9c9ae" opacity="0.6"/>
<ellipse cx="2244.9" cy="1093.9" rx="33.6" ry="17.0" fill="#efdcc9" opacity="1"/>
<ellipse cx="2218.0" cy="1099.2" rx="18.0" ry="13.1" fill="#efdcc9" opacity="0.8"/>
<ellipse cx="2252.8" cy="1104.4" rx="15.4" ry="10.5" fill="#efd3b8" opacity="0.6"/>
</g></g>
<g filter="url(#b1)">
<path d="M1763.5 825.2L1776.1 821.2L1795.1 816.0L1824.4 813.4L1852.3 812.0L1869.4 816.0L1884.0 817.3L1872.0 821.2L1873.0 826.5L1866.3 830.4L1867.7 834.3L1860.6 839.6L1859.6 846.1L1852.7 848.8L1836.8 852.7L1822.5 857.9L1817.5 860.6L1811.5 867.1L1806.6 873.7L1801.4 871.6L1795.3 868.4L1791.5 861.9L1789.1 855.3L1792.0 850.1L1790.3 846.1L1791.3 840.9L1788.0 834.3L1779.3 831.7L1769.2 831.7L1765.6 827.8Z" fill="#f1f1f8"/>
<path d="M1551.6 1235.5L1581.2 1235.5L1597.1 1232.9L1612.0 1229.0L1629.3 1226.4L1647.2 1223.7L1669.2 1225.0L1690.9 1226.4L1698.0 1222.4L1718.9 1222.4L1740.6 1223.7L1748.7 1219.8L1759.2 1219.8L1759.6 1211.9L1761.2 1205.4L1765.8 1200.1L1776.0 1197.0L1778.1 1200.1L1771.7 1204.1L1772.1 1210.6L1778.1 1219.8L1783.3 1226.4L1781.3 1230.3L1798.1 1235.5L1817.8 1235.5L1837.1 1234.2L1849.9 1230.3L1865.0 1223.7L1881.1 1218.5L1895.8 1215.9L1917.2 1214.6L1938.8 1213.2L1960.0 1214.6L1977.8 1211.9L1988.2 1213.2L2004.7 1208.5L2021.4 1204.1L2031.7 1206.2L2044.2 1208.0L2058.3 1210.6L2067.8 1213.2L2075.6 1210.6L2086.4 1206.7L2104.6 1205.4L2127.4 1204.1L2149.5 1204.1L2170.1 1206.2L2193.3 1204.6L2214.0 1206.2L2231.8 1210.6L2247.8 1215.9L2259.0 1217.2L2264.3 1219.8L2253.7 1227.7L2233.9 1234.2L2241.6 1235.5L2261.4 1235.5L2380.0 1272.0L1433.0 1272.0Z" fill="#f2f3f9"/>
<path d="M2021.7 911.7L2027.3 909.1L2034.7 909.1L2036.6 913.0L2031.9 914.3L2036.4 919.6L2039.7 924.8L2040.7 931.4L2037.3 934.5L2032.1 933.2L2029.2 930.0L2029.7 924.8L2024.0 919.6L2022.2 915.6Z M1682.1 908.3L1693.5 903.0L1700.0 905.7L1700.2 909.1L1694.1 909.1L1686.9 908.5Z M1688.9 920.9L1692.6 920.9L1698.5 910.9L1694.6 911.7L1690.3 915.6Z M1699.8 910.4L1708.4 910.4L1709.8 914.3L1703.9 918.2L1700.9 915.6Z M1699.8 921.7L1711.2 918.8L1718.4 916.4L1711.8 916.1L1708.7 919.0Z M1671.9 889.9L1676.6 889.9L1675.0 898.6L1672.1 898.6Z M1639.5 871.0L1653.7 866.3L1658.8 867.1L1648.6 871.0Z M1630.4 859.2L1641.1 855.3L1646.7 856.6L1639.5 860.6Z M1989.9 1030.0L1995.9 1030.5L1995.9 1037.0L1990.7 1037.8Z M2155.5 896.0L2159.2 893.3L2164.1 884.9L2162.7 885.5L2158.4 891.5Z M2049.3 909.1L2055.4 909.1L2056.5 914.3L2051.8 915.6Z M1976.5 873.7L1980.5 869.7L1982.0 872.4L1978.9 873.9Z" fill="#80b3d8"/>
</g>
</g>
<path d="M1669.8 795.0L2143.2 795.0A236.8 236.0 0 0 1 2143.2 1267.0L1669.8 1267.0A236.8 236.0 0 0 1 1669.8 795.0Z" fill="none" stroke="#000" stroke-width="3.2"/>
<circle cx="1797.2" cy="1132.1" r="2.7" fill="#2a10ff"/>
<text x="1809.7" y="1125.6" font-size="27.78">23:59:59 UT</text>
<text x="1809.7" y="1154.6" font-size="27.78">23:59:52 UT</text>
<rect x="1745.20" y="1308.20" width="548.60" height="26.40" fill="url(#cbh)" stroke="#000" stroke-width="2.50"/>
<line x1="1790.80" y1="1335.80" x2="1790.80" y2="1345.20" stroke="#000" stroke-width="2.20"/>
<text x="1790.80" y="1371.80" font-size="22.22" text-anchor="middle" fill="#000">400</text>
<line x1="1882.44" y1="1335.80" x2="1882.44" y2="1345.20" stroke="#000" stroke-width="2.20"/>
<text x="1882.44" y="1371.80" font-size="22.22" text-anchor="middle" fill="#000">600</text>
<line x1="1974.08" y1="1335.80" x2="1974.08" y2="1345.20" stroke="#000" stroke-width="2.20"/>
<text x="1974.08" y="1371.80" font-size="22.22" text-anchor="middle" fill="#000">800</text>
<line x1="2065.72" y1="1335.80" x2="2065.72" y2="1345.20" stroke="#000" stroke-width="2.20"/>
<text x="2065.72" y="1371.80" font-size="22.22" text-anchor="middle" fill="#000">1000</text>
<line x1="2157.36" y1="1335.80" x2="2157.36" y2="1345.20" stroke="#000" stroke-width="2.20"/>
<text x="2157.36" y="1371.80" font-size="22.22" text-anchor="middle" fill="#000">1200</text>
<line x1="2249.00" y1="1335.80" x2="2249.00" y2="1345.20" stroke="#000" stroke-width="2.20"/>
<text x="2249.00" y="1371.80" font-size="22.22" text-anchor="middle" fill="#000">1400</text>
<text x="2019.50" y="1406.80" font-size="22.22" text-anchor="middle" fill="#000">Altitude (km)</text>
<text x="1451.50" y="1404.20" font-size="22.22" text-anchor="start" fill="#000">Operating mode: AM</text>
<text x="1609.30" y="1450.90" font-size="22.22" text-anchor="middle" fill="#000">VSA</text>
<text x="1609.80" y="1480.70" font-size="22.22" text-anchor="middle" fill="#000">0</text>
<text x="1609.80" y="1509.90" font-size="22.22" text-anchor="middle" fill="#000">0</text>
<text x="1609.80" y="1539.10" font-size="22.22" text-anchor="middle" fill="#000">0</text>
<text x="1739.90" y="1450.90" font-size="22.22" text-anchor="middle" fill="#000">VES</text>
<text x="1740.40" y="1480.70" font-size="22.22" text-anchor="middle" fill="#000">-1.41</text>
<text x="1740.40" y="1509.90" font-size="22.22" text-anchor="middle" fill="#000">-1.23</text>
<text x="1740.40" y="1539.10" font-size="22.22" text-anchor="middle" fill="#000">-1.39</text>
<text x="1870.50" y="1450.90" font-size="22.22" text-anchor="middle" fill="#000">VD+</text>
<text x="1871.00" y="1480.70" font-size="22.22" text-anchor="middle" fill="#000">-0.04</text>
<text x="1871.00" y="1509.90" font-size="22.22" text-anchor="middle" fill="#000">0.50</text>
<text x="1871.00" y="1539.10" font-size="22.22" text-anchor="middle" fill="#000">-0.02</text>
<text x="2001.10" y="1450.90" font-size="22.22" text-anchor="middle" fill="#000">VD-</text>
<text x="2001.60" y="1480.70" font-size="22.22" text-anchor="middle" fill="#000">0.01</text>
<text x="2001.60" y="1509.90" font-size="22.22" text-anchor="middle" fill="#000">0.51</text>
<text x="2001.60" y="1539.10" font-size="22.22" text-anchor="middle" fill="#000">0.02</text>
<text x="2131.70" y="1450.90" font-size="22.22" text-anchor="middle" fill="#000">VMCPF</text>
<text x="2132.20" y="1480.70" font-size="22.22" text-anchor="middle" fill="#000">-3</text>
<text x="2132.20" y="1509.90" font-size="22.22" text-anchor="middle" fill="#000">-1</text>
<text x="2132.20" y="1539.10" font-size="22.22" text-anchor="middle" fill="#000">-2</text>
<text x="2262.30" y="1450.90" font-size="22.22" text-anchor="middle" fill="#000">VCMPB</text>
<text x="2262.80" y="1480.70" font-size="22.22" text-anchor="middle" fill="#000">0</text>
<text x="2262.80" y="1509.90" font-size="22.22" text-anchor="middle" fill="#000">0</text>
<text x="2262.80" y="1539.10" font-size="22.22" text-anchor="middle" fill="#000">0</text>
<text x="1450.30" y="1480.70" font-size="22.22" text-anchor="start" fill="#000">Min (V)</text>
<text x="1450.30" y="1509.90" font-size="22.22" text-anchor="start" fill="#000">Max (V)</text>
<text x="1450.30" y="1539.10" font-size="22.22" text-anchor="start" fill="#000">Ave (V)</text>
<text x="1447.30" y="1579.50" font-size="27.78" text-anchor="start" fill="#000">Produced by irm_summary version 5</text>
</svg></body></html>
